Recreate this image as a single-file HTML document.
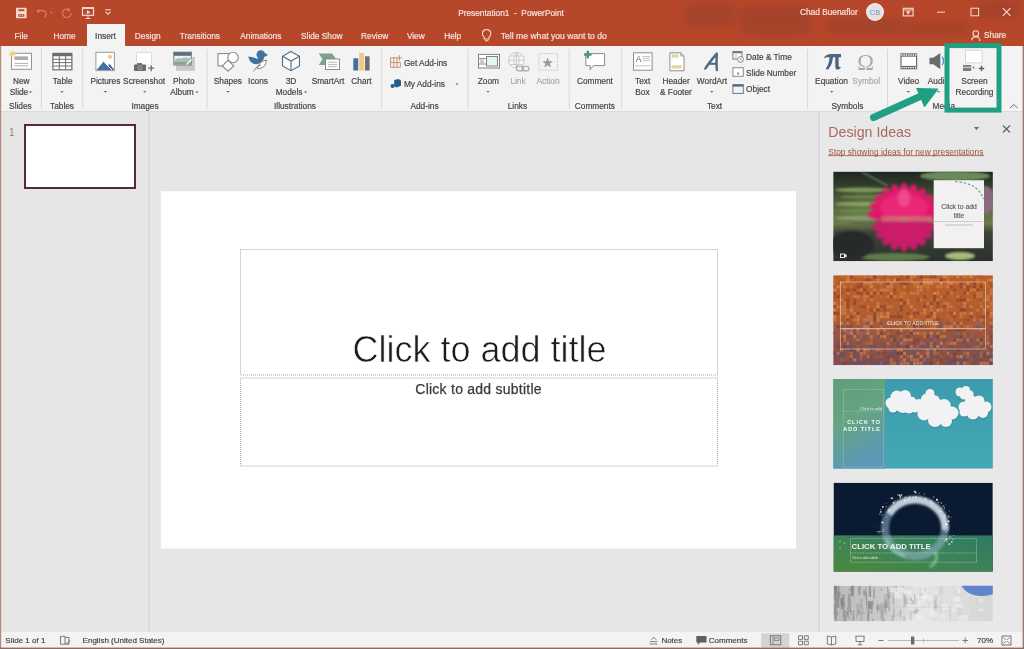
<!DOCTYPE html>
<html><head><meta charset="utf-8">
<style>
html,body{margin:0;padding:0;width:1024px;height:649px;overflow:hidden;background:#E6E6E6}
svg{display:block;filter:blur(0.4px);font-family:"Liberation Sans",sans-serif}
</style></head><body>
<svg width="1024" height="649" viewBox="0 0 1024 649">
<rect x="0" y="0" width="1024" height="46" fill="#B7472A"/>
<filter id="tb" x="-50%" y="-50%" width="200%" height="200%"><feGaussianBlur stdDeviation="4"/></filter>
<g filter="url(#tb)" fill="#A3432C" opacity="0.85"><rect x="684" y="3" width="52" height="24" rx="8"/><rect x="740" y="6" width="72" height="30" rx="8"/><rect x="826" y="17" width="74" height="17" rx="6"/><rect x="900" y="22" width="70" height="13" rx="6"/><rect x="975" y="0" width="45" height="18" rx="6"/></g>
<rect x="0" y="46" width="1024" height="66" fill="#F3F3F3"/>
<rect x="0" y="111" width="1024" height="1" fill="#DCDCDC"/>
<rect x="87" y="24" width="38" height="23" fill="#F3F3F3"/>
<rect x="0" y="112" width="1024" height="520" fill="#E6E6E6"/>
<text x="511" y="15.7" font-size="8.3" fill="#F7E4DE" stroke="#F7E4DE" stroke-width="0.18" text-anchor="middle" xml:space="preserve">Presentation1  -  PowerPoint</text>
<text x="800" y="15.2" font-size="8.3" fill="#F7E4DE" stroke="#F7E4DE" stroke-width="0.18" text-anchor="start" >Chad Buenaflor</text>
<text x="984" y="38.4" font-size="8.3" fill="#F7E4DE" stroke="#F7E4DE" stroke-width="0.18" text-anchor="start" >Share</text>
<text x="21.2" y="38.5" font-size="8.3" fill="#F7E4DE" stroke="#F7E4DE" stroke-width="0.18" text-anchor="middle" >File</text>
<text x="64.5" y="38.5" font-size="8.3" fill="#F7E4DE" stroke="#F7E4DE" stroke-width="0.18" text-anchor="middle" >Home</text>
<text x="147.7" y="38.5" font-size="8.3" fill="#F7E4DE" stroke="#F7E4DE" stroke-width="0.18" text-anchor="middle" >Design</text>
<text x="199.9" y="38.5" font-size="8.3" fill="#F7E4DE" stroke="#F7E4DE" stroke-width="0.18" text-anchor="middle" >Transitions</text>
<text x="260.8" y="38.5" font-size="8.3" fill="#F7E4DE" stroke="#F7E4DE" stroke-width="0.18" text-anchor="middle" >Animations</text>
<text x="321.8" y="38.5" font-size="8.3" fill="#F7E4DE" stroke="#F7E4DE" stroke-width="0.18" text-anchor="middle" >Slide Show</text>
<text x="374.7" y="38.5" font-size="8.3" fill="#F7E4DE" stroke="#F7E4DE" stroke-width="0.18" text-anchor="middle" >Review</text>
<text x="415.8" y="38.5" font-size="8.3" fill="#F7E4DE" stroke="#F7E4DE" stroke-width="0.18" text-anchor="middle" >View</text>
<text x="452.7" y="38.5" font-size="8.3" fill="#F7E4DE" stroke="#F7E4DE" stroke-width="0.18" text-anchor="middle" >Help</text>
<text x="105.5" y="38.5" font-size="8.3" fill="#444" stroke="#444" stroke-width="0.18" text-anchor="middle" >Insert</text>
<text x="500.8" y="38.5" font-size="8.6" fill="#F7E4DE" stroke="#F7E4DE" stroke-width="0.18" text-anchor="start" >Tell me what you want to do</text>
<text x="21.2" y="84.0" font-size="8.3" fill="#444" stroke="#444" stroke-width="0.18" text-anchor="middle" >New</text>
<text x="62.6" y="84.0" font-size="8.3" fill="#444" stroke="#444" stroke-width="0.18" text-anchor="middle" >Table</text>
<text x="105.4" y="84.0" font-size="8.3" fill="#444" stroke="#444" stroke-width="0.18" text-anchor="middle" >Pictures</text>
<text x="144.1" y="84.0" font-size="8.3" fill="#444" stroke="#444" stroke-width="0.18" text-anchor="middle" >Screenshot</text>
<text x="183.8" y="84.0" font-size="8.3" fill="#444" stroke="#444" stroke-width="0.18" text-anchor="middle" >Photo</text>
<text x="227.9" y="84.0" font-size="8.3" fill="#444" stroke="#444" stroke-width="0.18" text-anchor="middle" >Shapes</text>
<text x="258" y="84.0" font-size="8.3" fill="#444" stroke="#444" stroke-width="0.18" text-anchor="middle" >Icons</text>
<text x="291" y="84.0" font-size="8.3" fill="#444" stroke="#444" stroke-width="0.18" text-anchor="middle" >3D</text>
<text x="328" y="84.0" font-size="8.3" fill="#444" stroke="#444" stroke-width="0.18" text-anchor="middle" >SmartArt</text>
<text x="361.5" y="84.0" font-size="8.3" fill="#444" stroke="#444" stroke-width="0.18" text-anchor="middle" >Chart</text>
<text x="488.4" y="84.0" font-size="8.3" fill="#444" stroke="#444" stroke-width="0.18" text-anchor="middle" >Zoom</text>
<text x="594.9" y="84.0" font-size="8.3" fill="#444" stroke="#444" stroke-width="0.18" text-anchor="middle" >Comment</text>
<text x="642.6" y="84.0" font-size="8.3" fill="#444" stroke="#444" stroke-width="0.18" text-anchor="middle" >Text</text>
<text x="676.1" y="84.0" font-size="8.3" fill="#444" stroke="#444" stroke-width="0.18" text-anchor="middle" >Header</text>
<text x="712" y="84.0" font-size="8.3" fill="#444" stroke="#444" stroke-width="0.18" text-anchor="middle" >WordArt</text>
<text x="831.5" y="84.0" font-size="8.3" fill="#444" stroke="#444" stroke-width="0.18" text-anchor="middle" >Equation</text>
<text x="908.6" y="84.0" font-size="8.3" fill="#444" stroke="#444" stroke-width="0.18" text-anchor="middle" >Video</text>
<text x="938.4" y="84.0" font-size="8.3" fill="#444" stroke="#444" stroke-width="0.18" text-anchor="middle" >Audio</text>
<text x="974.5" y="84.0" font-size="8.3" fill="#444" stroke="#444" stroke-width="0.18" text-anchor="middle" >Screen</text>
<text x="518" y="84.0" font-size="8.3" fill="#A8A8A8" stroke="#A8A8A8" stroke-width="0.18" text-anchor="middle" >Link</text>
<text x="548" y="84.0" font-size="8.3" fill="#A8A8A8" stroke="#A8A8A8" stroke-width="0.18" text-anchor="middle" >Action</text>
<text x="866.2" y="84.0" font-size="8.3" fill="#A8A8A8" stroke="#A8A8A8" stroke-width="0.18" text-anchor="middle" >Symbol</text>
<text x="19.0" y="95.3" font-size="8.3" fill="#444" stroke="#444" stroke-width="0.18" text-anchor="middle">Slide</text>
<text x="182.0" y="95.3" font-size="8.3" fill="#444" stroke="#444" stroke-width="0.18" text-anchor="middle">Album</text>
<text x="289.0" y="95.3" font-size="8.3" fill="#444" stroke="#444" stroke-width="0.18" text-anchor="middle">Models</text>
<text x="642.4" y="95.3" font-size="8.3" fill="#444" stroke="#444" stroke-width="0.18" text-anchor="middle">Box</text>
<text x="675.9" y="95.3" font-size="8.3" fill="#444" stroke="#444" stroke-width="0.18" text-anchor="middle">&amp; Footer</text>
<text x="974.5" y="95.3" font-size="8.3" fill="#444" stroke="#444" stroke-width="0.18" text-anchor="middle">Recording</text>
<path d="M28.9,91.4 L32.1,91.4 L30.5,93.2 Z" fill="#666"/>
<path d="M60.4,91.2 L63.6,91.2 L62,93 Z" fill="#666"/>
<path d="M103.80000000000001,91.0 L107.0,91.0 L105.4,92.8 Z" fill="#666"/>
<path d="M143.1,91.0 L146.29999999999998,91.0 L144.7,92.8 Z" fill="#666"/>
<path d="M195.4,91.4 L198.6,91.4 L197,93.2 Z" fill="#666"/>
<path d="M226.3,91.0 L229.5,91.0 L227.9,92.8 Z" fill="#666"/>
<path d="M303.9,91.4 L307.1,91.4 L305.5,93.2 Z" fill="#666"/>
<path d="M486.4,91.0 L489.6,91.0 L488,92.8 Z" fill="#666"/>
<path d="M710.1999999999999,91.0 L713.4,91.0 L711.8,92.8 Z" fill="#666"/>
<path d="M830.1,91.0 L833.3000000000001,91.0 L831.7,92.8 Z" fill="#666"/>
<path d="M906.6999999999999,91.0 L909.9,91.0 L908.3,92.8 Z" fill="#666"/>
<path d="M936.9,91.0 L940.1,91.0 L938.5,92.8 Z" fill="#666"/>
<path d="M455.4,83.5 L458.6,83.5 L457,85.3 Z" fill="#666"/>
<text x="20.4" y="108.6" font-size="8.3" fill="#444" stroke="#444" stroke-width="0.18" text-anchor="middle" >Slides</text>
<text x="62" y="108.6" font-size="8.3" fill="#444" stroke="#444" stroke-width="0.18" text-anchor="middle" >Tables</text>
<text x="145" y="108.6" font-size="8.3" fill="#444" stroke="#444" stroke-width="0.18" text-anchor="middle" >Images</text>
<text x="295" y="108.6" font-size="8.3" fill="#444" stroke="#444" stroke-width="0.18" text-anchor="middle" >Illustrations</text>
<text x="424.5" y="108.6" font-size="8.3" fill="#444" stroke="#444" stroke-width="0.18" text-anchor="middle" >Add-ins</text>
<text x="517.4" y="108.6" font-size="8.3" fill="#444" stroke="#444" stroke-width="0.18" text-anchor="middle" >Links</text>
<text x="594.9" y="108.6" font-size="8.3" fill="#444" stroke="#444" stroke-width="0.18" text-anchor="middle" >Comments</text>
<text x="714.5" y="108.6" font-size="8.3" fill="#444" stroke="#444" stroke-width="0.18" text-anchor="middle" >Text</text>
<text x="847.5" y="108.6" font-size="8.3" fill="#444" stroke="#444" stroke-width="0.18" text-anchor="middle" >Symbols</text>
<text x="943.8" y="108.6" font-size="8.3" fill="#444" stroke="#444" stroke-width="0.18" text-anchor="middle" >Media</text>
<text x="403.9" y="65.5" font-size="8.3" fill="#444" stroke="#444" stroke-width="0.18" text-anchor="start" >Get Add-ins</text>
<text x="403.9" y="87.4" font-size="8.3" fill="#444" stroke="#444" stroke-width="0.18" text-anchor="start" >My Add-ins</text>
<text x="746.1" y="59.5" font-size="8.3" fill="#444" stroke="#444" stroke-width="0.18" text-anchor="start" >Date &amp; Time</text>
<text x="746.1" y="75.8" font-size="8.3" fill="#444" stroke="#444" stroke-width="0.18" text-anchor="start" >Slide Number</text>
<text x="746.1" y="92.0" font-size="8.3" fill="#444" stroke="#444" stroke-width="0.18" text-anchor="start" >Object</text>
<rect x="40.9" y="49" width="1" height="60" fill="#D8D8D8"/>
<rect x="82.2" y="49" width="1" height="60" fill="#D8D8D8"/>
<rect x="206.5" y="49" width="1" height="60" fill="#D8D8D8"/>
<rect x="381.2" y="49" width="1" height="60" fill="#D8D8D8"/>
<rect x="467.4" y="49" width="1" height="60" fill="#D8D8D8"/>
<rect x="568.7" y="49" width="1" height="60" fill="#D8D8D8"/>
<rect x="621.2" y="49" width="1" height="60" fill="#D8D8D8"/>
<rect x="807.1" y="49" width="1" height="60" fill="#D8D8D8"/>
<rect x="887.0" y="49" width="1" height="60" fill="#D8D8D8"/>
<path d="M1010,108 L1013.8,104.5 L1017.6,108" fill="none" stroke="#666" stroke-width="1"/>
<rect x="148.5" y="112" width="1.2" height="520" fill="#D2D2D2"/>
<rect x="818.5" y="112" width="1.2" height="520" fill="#D2D2D2"/>
<rect x="820" y="112" width="203" height="520" fill="#E8E8E8"/>
<text x="9" y="136" font-size="10" fill="#A8706A">1</text>
<rect x="25" y="125" width="110" height="63" fill="#fff" stroke="#5A2A2E" stroke-width="2"/>
<rect x="160.8" y="191.3" width="635.2" height="357.3" fill="#fff"/>
<rect x="240.5" y="249.5" width="477" height="125.5" fill="none" stroke="#A8A8A8" stroke-width="1" stroke-dasharray="1,1"/>
<rect x="240.5" y="378" width="477" height="88" fill="none" stroke="#A8A8A8" stroke-width="1" stroke-dasharray="1,1"/>
<text x="479.5" y="361.5" font-size="36" fill="#1C1C1C" stroke="#fff" stroke-width="0.6" text-anchor="middle">Click to add title</text>
<text x="478.6" y="393.8" font-size="14" letter-spacing="0.25" fill="#3A3A3A" stroke="#3A3A3A" stroke-width="0.25" text-anchor="middle">Click to add subtitle</text>
<text x="828.3" y="136.5" font-size="14.2" fill="#A8695F">Design Ideas</text>
<text x="828.3" y="154.5" font-size="8.4" fill="#A0523F">Stop showing ideas for new presentations</text>
<rect x="828.3" y="155.3" width="155.7" height="0.8" fill="#A0523F"/>
<path d="M974,127 L979,127 L976.5,130 Z" fill="#666"/>
<path d="M1003,125.5 L1010,132.5 M1010,125.5 L1003,132.5" stroke="#666" stroke-width="1.3"/>
<filter id="b0" x="-5%" y="-5%" width="110%" height="110%"><feGaussianBlur stdDeviation="0.5"/></filter>
<filter id="b1" x="-20%" y="-20%" width="140%" height="140%"><feGaussianBlur stdDeviation="1.2"/></filter>
<filter id="b15" x="-20%" y="-20%" width="140%" height="140%"><feGaussianBlur stdDeviation="1.6"/></filter>
<filter id="b2" x="-30%" y="-30%" width="160%" height="160%"><feGaussianBlur stdDeviation="2.5"/></filter>
<clipPath id="c1"><rect x="833.2" y="171.6" width="159.7" height="89.6"/></clipPath>
<clipPath id="c2"><rect x="833.2" y="275.2" width="159.7" height="90"/></clipPath>
<clipPath id="c3"><rect x="833.2" y="379" width="159.7" height="89.7"/></clipPath>
<clipPath id="c4"><rect x="833.5" y="482.7" width="159.3" height="89"/></clipPath>
<clipPath id="c5"><rect x="833.5" y="585.7" width="159.3" height="35.6"/></clipPath>
<linearGradient id="g1" x1="0" y1="0" x2="0" y2="1"><stop offset="0" stop-color="#1E2620"/><stop offset="0.18" stop-color="#34402E"/><stop offset="0.4" stop-color="#5A6A40"/><stop offset="0.58" stop-color="#6A7A4A"/><stop offset="0.68" stop-color="#3E4438"/><stop offset="1" stop-color="#2A302C"/></linearGradient>
<g clip-path="url(#c1)">
<rect x="833.2" y="171.6" width="159.7" height="89.6" fill="url(#g1)"/>
<g filter="url(#b1)">
<ellipse cx="862.5" cy="190" rx="27.5" ry="2.4" fill="#7E9858"/>
<ellipse cx="870.0" cy="197" rx="30.0" ry="2.4" fill="#687E48"/>
<ellipse cx="866.0" cy="204" rx="31.0" ry="2.4" fill="#86A05C"/>
<ellipse cx="873.0" cy="211" rx="35.0" ry="2.4" fill="#6A8848"/>
<ellipse cx="862.5" cy="218" rx="27.5" ry="2.4" fill="#8A9A6A"/>
<ellipse cx="875.0" cy="224" rx="25.0" ry="2.4" fill="#5A6A48"/>
<path d="M862,172 L888,186" stroke="#7A8A7A" stroke-width="1.3"/>
<ellipse cx="955" cy="176" rx="35" ry="5" fill="#6A8A5A"/>
<ellipse cx="985" cy="200" rx="10" ry="14" fill="#8A6A7A"/>
<ellipse cx="895" cy="257" rx="35" ry="4" fill="#5E7A48"/>
<ellipse cx="960" cy="256" rx="15" ry="4" fill="#A6B878"/>
<ellipse cx="852" cy="245" rx="22" ry="14" fill="#262C2C"/>
</g>
<g filter="url(#b15)">
<ellipse cx="884.5" cy="215.5" rx="5.5" ry="17" fill="#E2186C" transform="rotate(-85.0 884.5 215.5)"/>
<ellipse cx="885.9" cy="210.6" rx="5.5" ry="17" fill="#E2186C" transform="rotate(-68.0 885.9 210.6)"/>
<ellipse cx="888.8" cy="206.3" rx="5.5" ry="17" fill="#E2186C" transform="rotate(-51.0 888.8 206.3)"/>
<ellipse cx="893.1" cy="202.9" rx="5.5" ry="17" fill="#E2186C" transform="rotate(-34.0 893.1 202.9)"/>
<ellipse cx="898.3" cy="200.7" rx="5.5" ry="17" fill="#E2186C" transform="rotate(-17.0 898.3 200.7)"/>
<ellipse cx="904.0" cy="200.0" rx="5.5" ry="17" fill="#E2186C" transform="rotate(0.0 904.0 200.0)"/>
<ellipse cx="909.7" cy="200.7" rx="5.5" ry="17" fill="#E2186C" transform="rotate(17.0 909.7 200.7)"/>
<ellipse cx="914.9" cy="202.9" rx="5.5" ry="17" fill="#E2186C" transform="rotate(34.0 914.9 202.9)"/>
<ellipse cx="919.2" cy="206.3" rx="5.5" ry="17" fill="#E2186C" transform="rotate(51.0 919.2 206.3)"/>
<ellipse cx="922.1" cy="210.6" rx="5.5" ry="17" fill="#E2186C" transform="rotate(68.0 922.1 210.6)"/>
<ellipse cx="923.5" cy="215.5" rx="5.5" ry="17" fill="#E2186C" transform="rotate(85.0 923.5 215.5)"/>
<ellipse cx="904" cy="207" rx="24" ry="13" fill="#EA2676"/>
<ellipse cx="904" cy="198" rx="6" ry="9" fill="#F04A90"/>
<ellipse cx="921.0" cy="224.6" rx="5.5" ry="15" fill="#C81A68" transform="rotate(100.0 921.0 224.6)"/>
<ellipse cx="918.9" cy="229.5" rx="5.5" ry="15" fill="#C81A68" transform="rotate(120.0 918.9 229.5)"/>
<ellipse cx="915.1" cy="233.5" rx="5.5" ry="15" fill="#C81A68" transform="rotate(140.0 915.1 233.5)"/>
<ellipse cx="909.9" cy="236.1" rx="5.5" ry="15" fill="#C81A68" transform="rotate(160.0 909.9 236.1)"/>
<ellipse cx="904.0" cy="237.0" rx="5.5" ry="15" fill="#C81A68" transform="rotate(180.0 904.0 237.0)"/>
<ellipse cx="898.1" cy="236.1" rx="5.5" ry="15" fill="#C81A68" transform="rotate(200.0 898.1 236.1)"/>
<ellipse cx="892.9" cy="233.5" rx="5.5" ry="15" fill="#C81A68" transform="rotate(220.0 892.9 233.5)"/>
<ellipse cx="889.1" cy="229.5" rx="5.5" ry="15" fill="#C81A68" transform="rotate(240.0 889.1 229.5)"/>
<ellipse cx="887.0" cy="224.6" rx="5.5" ry="15" fill="#C81A68" transform="rotate(260.0 887.0 224.6)"/>
<ellipse cx="904" cy="232" rx="22" ry="10" fill="#CC1C6A"/>
<rect x="882" y="217" width="50" height="4" fill="#C8907A" opacity="0.7"/>
</g>
<rect x="933.7" y="180.2" width="50.3" height="68" fill="#F3F0F2"/>
<path d="M955,181.5 Q978,183 983.5,199" fill="none" stroke="#58A8A0" stroke-width="1.2" stroke-dasharray="2.5,1.8"/>
<text x="959" y="209" font-size="6.8" fill="#606060" text-anchor="middle" stroke="#606060" stroke-width="0.15">Click to add</text>
<text x="959" y="217.5" font-size="6.8" fill="#606060" text-anchor="middle" stroke="#606060" stroke-width="0.15">title</text>
<path d="M935,221.5 H983" stroke="#888" stroke-width="0.6" stroke-dasharray="0.8,0.6"/>
<path d="M945,225 H973" stroke="#B0B0B0" stroke-width="0.8"/>
<rect x="840.5" y="254" width="4" height="3.5" fill="none" stroke="#fff" stroke-width="0.9"/><path d="M844.5,255 L846.5,254 V257.5 L844.5,256.5" fill="#fff"/>
</g>
<linearGradient id="g2" x1="0" y1="0" x2="0" y2="1"><stop offset="0" stop-color="#BA5E2A"/><stop offset="0.45" stop-color="#B45E30"/><stop offset="0.75" stop-color="#8E5246"/><stop offset="1" stop-color="#7A4E50"/></linearGradient>
<pattern id="p2" x="833" y="275" width="12" height="8" patternUnits="userSpaceOnUse"><rect x="0" y="0" width="5.5" height="3.6" fill="#E08A40" opacity="0.35"/><rect x="6" y="4" width="5.5" height="3.6" fill="#6A3A2A" opacity="0.3"/><rect x="6" y="0" width="5.5" height="3.6" fill="#D4703A" opacity="0.25"/><rect x="0" y="4" width="5.5" height="3.6" fill="#B8785A" opacity="0.3"/></pattern>
<g clip-path="url(#c2)">
<rect x="833.2" y="275.2" width="159.7" height="90" fill="url(#g2)"/>
<g><rect x="839.9" y="275.2" width="3" height="3" fill="#D2702E" opacity="0.55"/><rect x="843.2" y="275.2" width="3" height="3" fill="#D2702E" opacity="0.55"/><rect x="846.5" y="275.2" width="3" height="3" fill="#E0863E" opacity="0.55"/><rect x="849.9" y="275.2" width="3" height="3" fill="#8A3A2A" opacity="0.55"/><rect x="856.5" y="275.2" width="3" height="3" fill="#D2702E" opacity="0.55"/><rect x="863.2" y="275.2" width="3" height="3" fill="#E0863E" opacity="0.55"/><rect x="866.5" y="275.2" width="3" height="3" fill="#D2702E" opacity="0.55"/><rect x="869.8" y="275.2" width="3" height="3" fill="#E0863E" opacity="0.55"/><rect x="873.2" y="275.2" width="3" height="3" fill="#6A3A30" opacity="0.55"/><rect x="883.2" y="275.2" width="3" height="3" fill="#A8502A" opacity="0.55"/><rect x="899.8" y="275.2" width="3" height="3" fill="#A8502A" opacity="0.55"/><rect x="906.5" y="275.2" width="3" height="3" fill="#8A3A2A" opacity="0.55"/><rect x="909.8" y="275.2" width="3" height="3" fill="#D89060" opacity="0.55"/><rect x="913.1" y="275.2" width="3" height="3" fill="#E0863E" opacity="0.55"/><rect x="916.5" y="275.2" width="3" height="3" fill="#B05A3A" opacity="0.55"/><rect x="919.8" y="275.2" width="3" height="3" fill="#6A3A30" opacity="0.55"/><rect x="923.1" y="275.2" width="3" height="3" fill="#B05A3A" opacity="0.55"/><rect x="926.4" y="275.2" width="3" height="3" fill="#B05A3A" opacity="0.55"/><rect x="929.8" y="275.2" width="3" height="3" fill="#8A3A2A" opacity="0.55"/><rect x="933.1" y="275.2" width="3" height="3" fill="#8A3A2A" opacity="0.55"/><rect x="943.1" y="275.2" width="3" height="3" fill="#E8A060" opacity="0.55"/><rect x="946.4" y="275.2" width="3" height="3" fill="#C88A5A" opacity="0.55"/><rect x="949.8" y="275.2" width="3" height="3" fill="#D2702E" opacity="0.55"/><rect x="956.4" y="275.2" width="3" height="3" fill="#E8A060" opacity="0.55"/><rect x="963.1" y="275.2" width="3" height="3" fill="#E0863E" opacity="0.55"/><rect x="966.4" y="275.2" width="3" height="3" fill="#D2702E" opacity="0.55"/><rect x="969.7" y="275.2" width="3" height="3" fill="#E8A060" opacity="0.55"/><rect x="976.4" y="275.2" width="3" height="3" fill="#B05A3A" opacity="0.55"/><rect x="979.7" y="275.2" width="3" height="3" fill="#B05A3A" opacity="0.55"/><rect x="833.2" y="278.5" width="3" height="3" fill="#D2702E" opacity="0.55"/><rect x="839.9" y="278.5" width="3" height="3" fill="#B05A3A" opacity="0.55"/><rect x="846.5" y="278.5" width="3" height="3" fill="#E8A060" opacity="0.55"/><rect x="853.2" y="278.5" width="3" height="3" fill="#A8502A" opacity="0.55"/><rect x="856.5" y="278.5" width="3" height="3" fill="#B05A3A" opacity="0.55"/><rect x="863.2" y="278.5" width="3" height="3" fill="#A8502A" opacity="0.55"/><rect x="866.5" y="278.5" width="3" height="3" fill="#6A3A30" opacity="0.55"/><rect x="869.8" y="278.5" width="3" height="3" fill="#B05A3A" opacity="0.55"/><rect x="876.5" y="278.5" width="3" height="3" fill="#D89060" opacity="0.55"/><rect x="886.5" y="278.5" width="3" height="3" fill="#D89060" opacity="0.55"/><rect x="893.1" y="278.5" width="3" height="3" fill="#E8A060" opacity="0.55"/><rect x="896.5" y="278.5" width="3" height="3" fill="#6A3A30" opacity="0.55"/><rect x="899.8" y="278.5" width="3" height="3" fill="#A8502A" opacity="0.55"/><rect x="909.8" y="278.5" width="3" height="3" fill="#E0863E" opacity="0.55"/><rect x="913.1" y="278.5" width="3" height="3" fill="#A8502A" opacity="0.55"/><rect x="923.1" y="278.5" width="3" height="3" fill="#E8A060" opacity="0.55"/><rect x="926.4" y="278.5" width="3" height="3" fill="#E8A060" opacity="0.55"/><rect x="929.8" y="278.5" width="3" height="3" fill="#D89060" opacity="0.55"/><rect x="933.1" y="278.5" width="3" height="3" fill="#E0863E" opacity="0.55"/><rect x="936.4" y="278.5" width="3" height="3" fill="#D89060" opacity="0.55"/><rect x="939.8" y="278.5" width="3" height="3" fill="#6A3A30" opacity="0.55"/><rect x="943.1" y="278.5" width="3" height="3" fill="#B05A3A" opacity="0.55"/><rect x="946.4" y="278.5" width="3" height="3" fill="#E0863E" opacity="0.55"/><rect x="953.1" y="278.5" width="3" height="3" fill="#B05A3A" opacity="0.55"/><rect x="976.4" y="278.5" width="3" height="3" fill="#E0863E" opacity="0.55"/><rect x="986.4" y="278.5" width="3" height="3" fill="#C88A5A" opacity="0.55"/><rect x="989.7" y="278.5" width="3" height="3" fill="#E8A060" opacity="0.55"/><rect x="833.2" y="281.9" width="3" height="3" fill="#D2702E" opacity="0.55"/><rect x="836.5" y="281.9" width="3" height="3" fill="#B05A3A" opacity="0.55"/><rect x="839.9" y="281.9" width="3" height="3" fill="#C88A5A" opacity="0.55"/><rect x="856.5" y="281.9" width="3" height="3" fill="#A8502A" opacity="0.55"/><rect x="859.8" y="281.9" width="3" height="3" fill="#8A3A2A" opacity="0.55"/><rect x="863.2" y="281.9" width="3" height="3" fill="#D89060" opacity="0.55"/><rect x="866.5" y="281.9" width="3" height="3" fill="#D89060" opacity="0.55"/><rect x="869.8" y="281.9" width="3" height="3" fill="#D89060" opacity="0.55"/><rect x="876.5" y="281.9" width="3" height="3" fill="#D2702E" opacity="0.55"/><rect x="879.8" y="281.9" width="3" height="3" fill="#C88A5A" opacity="0.55"/><rect x="883.2" y="281.9" width="3" height="3" fill="#A8502A" opacity="0.55"/><rect x="886.5" y="281.9" width="3" height="3" fill="#8A3A2A" opacity="0.55"/><rect x="889.8" y="281.9" width="3" height="3" fill="#D89060" opacity="0.55"/><rect x="899.8" y="281.9" width="3" height="3" fill="#8A3A2A" opacity="0.55"/><rect x="903.1" y="281.9" width="3" height="3" fill="#6A3A30" opacity="0.55"/><rect x="906.5" y="281.9" width="3" height="3" fill="#8A3A2A" opacity="0.55"/><rect x="913.1" y="281.9" width="3" height="3" fill="#E0863E" opacity="0.55"/><rect x="916.5" y="281.9" width="3" height="3" fill="#C88A5A" opacity="0.55"/><rect x="919.8" y="281.9" width="3" height="3" fill="#8A3A2A" opacity="0.55"/><rect x="923.1" y="281.9" width="3" height="3" fill="#E8A060" opacity="0.55"/><rect x="926.4" y="281.9" width="3" height="3" fill="#E8A060" opacity="0.55"/><rect x="929.8" y="281.9" width="3" height="3" fill="#E8A060" opacity="0.55"/><rect x="939.8" y="281.9" width="3" height="3" fill="#E8A060" opacity="0.55"/><rect x="946.4" y="281.9" width="3" height="3" fill="#E0863E" opacity="0.55"/><rect x="949.8" y="281.9" width="3" height="3" fill="#E8A060" opacity="0.55"/><rect x="953.1" y="281.9" width="3" height="3" fill="#D2702E" opacity="0.55"/><rect x="956.4" y="281.9" width="3" height="3" fill="#D2702E" opacity="0.55"/><rect x="959.7" y="281.9" width="3" height="3" fill="#8A3A2A" opacity="0.55"/><rect x="963.1" y="281.9" width="3" height="3" fill="#A8502A" opacity="0.55"/><rect x="966.4" y="281.9" width="3" height="3" fill="#E8A060" opacity="0.55"/><rect x="973.1" y="281.9" width="3" height="3" fill="#6A3A30" opacity="0.55"/><rect x="976.4" y="281.9" width="3" height="3" fill="#D2702E" opacity="0.55"/><rect x="979.7" y="281.9" width="3" height="3" fill="#A8502A" opacity="0.55"/><rect x="983.1" y="281.9" width="3" height="3" fill="#E0863E" opacity="0.55"/><rect x="989.7" y="281.9" width="3" height="3" fill="#A8502A" opacity="0.55"/><rect x="833.2" y="285.2" width="3" height="3" fill="#B05A3A" opacity="0.55"/><rect x="836.5" y="285.2" width="3" height="3" fill="#E8A060" opacity="0.55"/><rect x="843.2" y="285.2" width="3" height="3" fill="#E0863E" opacity="0.55"/><rect x="849.9" y="285.2" width="3" height="3" fill="#D2702E" opacity="0.55"/><rect x="853.2" y="285.2" width="3" height="3" fill="#A8502A" opacity="0.55"/><rect x="856.5" y="285.2" width="3" height="3" fill="#8A3A2A" opacity="0.55"/><rect x="859.8" y="285.2" width="3" height="3" fill="#8A3A2A" opacity="0.55"/><rect x="869.8" y="285.2" width="3" height="3" fill="#E8A060" opacity="0.55"/><rect x="876.5" y="285.2" width="3" height="3" fill="#A8502A" opacity="0.55"/><rect x="883.2" y="285.2" width="3" height="3" fill="#B05A3A" opacity="0.55"/><rect x="886.5" y="285.2" width="3" height="3" fill="#D89060" opacity="0.55"/><rect x="889.8" y="285.2" width="3" height="3" fill="#D89060" opacity="0.55"/><rect x="899.8" y="285.2" width="3" height="3" fill="#B05A3A" opacity="0.55"/><rect x="903.1" y="285.2" width="3" height="3" fill="#E0863E" opacity="0.55"/><rect x="906.5" y="285.2" width="3" height="3" fill="#A8502A" opacity="0.55"/><rect x="913.1" y="285.2" width="3" height="3" fill="#D2702E" opacity="0.55"/><rect x="916.5" y="285.2" width="3" height="3" fill="#E8A060" opacity="0.55"/><rect x="919.8" y="285.2" width="3" height="3" fill="#D89060" opacity="0.55"/><rect x="923.1" y="285.2" width="3" height="3" fill="#D2702E" opacity="0.55"/><rect x="926.4" y="285.2" width="3" height="3" fill="#E0863E" opacity="0.55"/><rect x="936.4" y="285.2" width="3" height="3" fill="#D89060" opacity="0.55"/><rect x="939.8" y="285.2" width="3" height="3" fill="#E0863E" opacity="0.55"/><rect x="943.1" y="285.2" width="3" height="3" fill="#D2702E" opacity="0.55"/><rect x="946.4" y="285.2" width="3" height="3" fill="#D89060" opacity="0.55"/><rect x="949.8" y="285.2" width="3" height="3" fill="#8A3A2A" opacity="0.55"/><rect x="953.1" y="285.2" width="3" height="3" fill="#B05A3A" opacity="0.55"/><rect x="956.4" y="285.2" width="3" height="3" fill="#B05A3A" opacity="0.55"/><rect x="959.7" y="285.2" width="3" height="3" fill="#8A3A2A" opacity="0.55"/><rect x="963.1" y="285.2" width="3" height="3" fill="#C88A5A" opacity="0.55"/><rect x="966.4" y="285.2" width="3" height="3" fill="#8A3A2A" opacity="0.55"/><rect x="969.7" y="285.2" width="3" height="3" fill="#A8502A" opacity="0.55"/><rect x="973.1" y="285.2" width="3" height="3" fill="#6A3A30" opacity="0.55"/><rect x="976.4" y="285.2" width="3" height="3" fill="#D2702E" opacity="0.55"/><rect x="979.7" y="285.2" width="3" height="3" fill="#6A3A30" opacity="0.55"/><rect x="986.4" y="285.2" width="3" height="3" fill="#D2702E" opacity="0.55"/><rect x="989.7" y="285.2" width="3" height="3" fill="#A8502A" opacity="0.55"/><rect x="833.2" y="288.5" width="3" height="3" fill="#E8A060" opacity="0.55"/><rect x="839.9" y="288.5" width="3" height="3" fill="#B05A3A" opacity="0.55"/><rect x="846.5" y="288.5" width="3" height="3" fill="#6A3A30" opacity="0.55"/><rect x="849.9" y="288.5" width="3" height="3" fill="#A8502A" opacity="0.55"/><rect x="853.2" y="288.5" width="3" height="3" fill="#8A3A2A" opacity="0.55"/><rect x="859.8" y="288.5" width="3" height="3" fill="#D89060" opacity="0.55"/><rect x="863.2" y="288.5" width="3" height="3" fill="#6A3A30" opacity="0.55"/><rect x="873.2" y="288.5" width="3" height="3" fill="#E0863E" opacity="0.55"/><rect x="879.8" y="288.5" width="3" height="3" fill="#E0863E" opacity="0.55"/><rect x="883.2" y="288.5" width="3" height="3" fill="#D89060" opacity="0.55"/><rect x="886.5" y="288.5" width="3" height="3" fill="#D89060" opacity="0.55"/><rect x="889.8" y="288.5" width="3" height="3" fill="#D2702E" opacity="0.55"/><rect x="893.1" y="288.5" width="3" height="3" fill="#8A3A2A" opacity="0.55"/><rect x="896.5" y="288.5" width="3" height="3" fill="#D2702E" opacity="0.55"/><rect x="906.5" y="288.5" width="3" height="3" fill="#A8502A" opacity="0.55"/><rect x="916.5" y="288.5" width="3" height="3" fill="#C88A5A" opacity="0.55"/><rect x="919.8" y="288.5" width="3" height="3" fill="#D89060" opacity="0.55"/><rect x="923.1" y="288.5" width="3" height="3" fill="#B05A3A" opacity="0.55"/><rect x="926.4" y="288.5" width="3" height="3" fill="#D2702E" opacity="0.55"/><rect x="933.1" y="288.5" width="3" height="3" fill="#A8502A" opacity="0.55"/><rect x="936.4" y="288.5" width="3" height="3" fill="#D2702E" opacity="0.55"/><rect x="953.1" y="288.5" width="3" height="3" fill="#8A3A2A" opacity="0.55"/><rect x="959.7" y="288.5" width="3" height="3" fill="#B05A3A" opacity="0.55"/><rect x="966.4" y="288.5" width="3" height="3" fill="#6A3A30" opacity="0.55"/><rect x="969.7" y="288.5" width="3" height="3" fill="#C88A5A" opacity="0.55"/><rect x="973.1" y="288.5" width="3" height="3" fill="#E0863E" opacity="0.55"/><rect x="976.4" y="288.5" width="3" height="3" fill="#8A3A2A" opacity="0.55"/><rect x="979.7" y="288.5" width="3" height="3" fill="#A8502A" opacity="0.55"/><rect x="989.7" y="288.5" width="3" height="3" fill="#C88A5A" opacity="0.55"/><rect x="833.2" y="291.8" width="3" height="3" fill="#8A3A2A" opacity="0.55"/><rect x="839.9" y="291.8" width="3" height="3" fill="#A8502A" opacity="0.55"/><rect x="846.5" y="291.8" width="3" height="3" fill="#C88A5A" opacity="0.55"/><rect x="856.5" y="291.8" width="3" height="3" fill="#8A3A2A" opacity="0.55"/><rect x="859.8" y="291.8" width="3" height="3" fill="#8A3A2A" opacity="0.55"/><rect x="863.2" y="291.8" width="3" height="3" fill="#D2702E" opacity="0.55"/><rect x="866.5" y="291.8" width="3" height="3" fill="#6A3A30" opacity="0.55"/><rect x="869.8" y="291.8" width="3" height="3" fill="#D89060" opacity="0.55"/><rect x="873.2" y="291.8" width="3" height="3" fill="#6A3A30" opacity="0.55"/><rect x="876.5" y="291.8" width="3" height="3" fill="#C88A5A" opacity="0.55"/><rect x="879.8" y="291.8" width="3" height="3" fill="#8A3A2A" opacity="0.55"/><rect x="886.5" y="291.8" width="3" height="3" fill="#A8502A" opacity="0.55"/><rect x="889.8" y="291.8" width="3" height="3" fill="#E8A060" opacity="0.55"/><rect x="893.1" y="291.8" width="3" height="3" fill="#A8502A" opacity="0.55"/><rect x="899.8" y="291.8" width="3" height="3" fill="#C88A5A" opacity="0.55"/><rect x="903.1" y="291.8" width="3" height="3" fill="#E0863E" opacity="0.55"/><rect x="909.8" y="291.8" width="3" height="3" fill="#D89060" opacity="0.55"/><rect x="913.1" y="291.8" width="3" height="3" fill="#C88A5A" opacity="0.55"/><rect x="916.5" y="291.8" width="3" height="3" fill="#C88A5A" opacity="0.55"/><rect x="933.1" y="291.8" width="3" height="3" fill="#E8A060" opacity="0.55"/><rect x="936.4" y="291.8" width="3" height="3" fill="#D89060" opacity="0.55"/><rect x="946.4" y="291.8" width="3" height="3" fill="#8A3A2A" opacity="0.55"/><rect x="949.8" y="291.8" width="3" height="3" fill="#E0863E" opacity="0.55"/><rect x="963.1" y="291.8" width="3" height="3" fill="#8A3A2A" opacity="0.55"/><rect x="966.4" y="291.8" width="3" height="3" fill="#E0863E" opacity="0.55"/><rect x="973.1" y="291.8" width="3" height="3" fill="#A8502A" opacity="0.55"/><rect x="976.4" y="291.8" width="3" height="3" fill="#E0863E" opacity="0.55"/><rect x="979.7" y="291.8" width="3" height="3" fill="#C88A5A" opacity="0.55"/><rect x="989.7" y="291.8" width="3" height="3" fill="#D89060" opacity="0.55"/><rect x="833.2" y="295.2" width="3" height="3" fill="#A8502A" opacity="0.55"/><rect x="836.5" y="295.2" width="3" height="3" fill="#6A3A30" opacity="0.55"/><rect x="839.9" y="295.2" width="3" height="3" fill="#B05A3A" opacity="0.55"/><rect x="846.5" y="295.2" width="3" height="3" fill="#A8502A" opacity="0.55"/><rect x="853.2" y="295.2" width="3" height="3" fill="#D89060" opacity="0.55"/><rect x="856.5" y="295.2" width="3" height="3" fill="#D89060" opacity="0.55"/><rect x="863.2" y="295.2" width="3" height="3" fill="#D89060" opacity="0.55"/><rect x="866.5" y="295.2" width="3" height="3" fill="#E0863E" opacity="0.55"/><rect x="869.8" y="295.2" width="3" height="3" fill="#8A3A2A" opacity="0.55"/><rect x="879.8" y="295.2" width="3" height="3" fill="#D2702E" opacity="0.55"/><rect x="883.2" y="295.2" width="3" height="3" fill="#B05A3A" opacity="0.55"/><rect x="886.5" y="295.2" width="3" height="3" fill="#E0863E" opacity="0.55"/><rect x="889.8" y="295.2" width="3" height="3" fill="#8A3A2A" opacity="0.55"/><rect x="893.1" y="295.2" width="3" height="3" fill="#E0863E" opacity="0.55"/><rect x="896.5" y="295.2" width="3" height="3" fill="#D2702E" opacity="0.55"/><rect x="899.8" y="295.2" width="3" height="3" fill="#D89060" opacity="0.55"/><rect x="903.1" y="295.2" width="3" height="3" fill="#D2702E" opacity="0.55"/><rect x="906.5" y="295.2" width="3" height="3" fill="#D2702E" opacity="0.55"/><rect x="909.8" y="295.2" width="3" height="3" fill="#B05A3A" opacity="0.55"/><rect x="923.1" y="295.2" width="3" height="3" fill="#8A3A2A" opacity="0.55"/><rect x="929.8" y="295.2" width="3" height="3" fill="#B05A3A" opacity="0.55"/><rect x="933.1" y="295.2" width="3" height="3" fill="#6A3A30" opacity="0.55"/><rect x="939.8" y="295.2" width="3" height="3" fill="#C88A5A" opacity="0.55"/><rect x="943.1" y="295.2" width="3" height="3" fill="#8A3A2A" opacity="0.55"/><rect x="956.4" y="295.2" width="3" height="3" fill="#C88A5A" opacity="0.55"/><rect x="959.7" y="295.2" width="3" height="3" fill="#A8502A" opacity="0.55"/><rect x="973.1" y="295.2" width="3" height="3" fill="#8A3A2A" opacity="0.55"/><rect x="976.4" y="295.2" width="3" height="3" fill="#C88A5A" opacity="0.55"/><rect x="979.7" y="295.2" width="3" height="3" fill="#C88A5A" opacity="0.55"/><rect x="983.1" y="295.2" width="3" height="3" fill="#B05A3A" opacity="0.55"/><rect x="986.4" y="295.2" width="3" height="3" fill="#D89060" opacity="0.55"/><rect x="833.2" y="298.5" width="3" height="3" fill="#B05A3A" opacity="0.55"/><rect x="839.9" y="298.5" width="3" height="3" fill="#D89060" opacity="0.55"/><rect x="843.2" y="298.5" width="3" height="3" fill="#B05A3A" opacity="0.55"/><rect x="846.5" y="298.5" width="3" height="3" fill="#6A3A30" opacity="0.55"/><rect x="853.2" y="298.5" width="3" height="3" fill="#8A3A2A" opacity="0.55"/><rect x="863.2" y="298.5" width="3" height="3" fill="#C88A5A" opacity="0.55"/><rect x="866.5" y="298.5" width="3" height="3" fill="#A8502A" opacity="0.55"/><rect x="869.8" y="298.5" width="3" height="3" fill="#D89060" opacity="0.55"/><rect x="879.8" y="298.5" width="3" height="3" fill="#B05A3A" opacity="0.55"/><rect x="883.2" y="298.5" width="3" height="3" fill="#B05A3A" opacity="0.55"/><rect x="886.5" y="298.5" width="3" height="3" fill="#A8502A" opacity="0.55"/><rect x="893.1" y="298.5" width="3" height="3" fill="#B05A3A" opacity="0.55"/><rect x="896.5" y="298.5" width="3" height="3" fill="#A8502A" opacity="0.55"/><rect x="899.8" y="298.5" width="3" height="3" fill="#6A3A30" opacity="0.55"/><rect x="906.5" y="298.5" width="3" height="3" fill="#E0863E" opacity="0.55"/><rect x="916.5" y="298.5" width="3" height="3" fill="#8A3A2A" opacity="0.55"/><rect x="919.8" y="298.5" width="3" height="3" fill="#C88A5A" opacity="0.55"/><rect x="929.8" y="298.5" width="3" height="3" fill="#D2702E" opacity="0.55"/><rect x="933.1" y="298.5" width="3" height="3" fill="#6A3A30" opacity="0.55"/><rect x="936.4" y="298.5" width="3" height="3" fill="#E0863E" opacity="0.55"/><rect x="946.4" y="298.5" width="3" height="3" fill="#A8502A" opacity="0.55"/><rect x="956.4" y="298.5" width="3" height="3" fill="#8A3A2A" opacity="0.55"/><rect x="959.7" y="298.5" width="3" height="3" fill="#6A3A30" opacity="0.55"/><rect x="963.1" y="298.5" width="3" height="3" fill="#6A3A30" opacity="0.55"/><rect x="966.4" y="298.5" width="3" height="3" fill="#D89060" opacity="0.55"/><rect x="969.7" y="298.5" width="3" height="3" fill="#D2702E" opacity="0.55"/><rect x="976.4" y="298.5" width="3" height="3" fill="#B05A3A" opacity="0.55"/><rect x="979.7" y="298.5" width="3" height="3" fill="#A8502A" opacity="0.55"/><rect x="983.1" y="298.5" width="3" height="3" fill="#C88A5A" opacity="0.55"/><rect x="986.4" y="298.5" width="3" height="3" fill="#D89060" opacity="0.55"/><rect x="833.2" y="301.8" width="3" height="3" fill="#E8A060" opacity="0.55"/><rect x="843.2" y="301.8" width="3" height="3" fill="#C88A5A" opacity="0.55"/><rect x="846.5" y="301.8" width="3" height="3" fill="#8A3A2A" opacity="0.55"/><rect x="853.2" y="301.8" width="3" height="3" fill="#6A3A30" opacity="0.55"/><rect x="859.8" y="301.8" width="3" height="3" fill="#D2702E" opacity="0.55"/><rect x="866.5" y="301.8" width="3" height="3" fill="#B05A3A" opacity="0.55"/><rect x="869.8" y="301.8" width="3" height="3" fill="#B05A3A" opacity="0.55"/><rect x="873.2" y="301.8" width="3" height="3" fill="#B05A3A" opacity="0.55"/><rect x="876.5" y="301.8" width="3" height="3" fill="#D89060" opacity="0.55"/><rect x="899.8" y="301.8" width="3" height="3" fill="#E0863E" opacity="0.55"/><rect x="903.1" y="301.8" width="3" height="3" fill="#6A3A30" opacity="0.55"/><rect x="906.5" y="301.8" width="3" height="3" fill="#D89060" opacity="0.55"/><rect x="916.5" y="301.8" width="3" height="3" fill="#B05A3A" opacity="0.55"/><rect x="923.1" y="301.8" width="3" height="3" fill="#A8502A" opacity="0.55"/><rect x="926.4" y="301.8" width="3" height="3" fill="#D89060" opacity="0.55"/><rect x="929.8" y="301.8" width="3" height="3" fill="#8A3A2A" opacity="0.55"/><rect x="936.4" y="301.8" width="3" height="3" fill="#6A3A30" opacity="0.55"/><rect x="939.8" y="301.8" width="3" height="3" fill="#B05A3A" opacity="0.55"/><rect x="943.1" y="301.8" width="3" height="3" fill="#C88A5A" opacity="0.55"/><rect x="946.4" y="301.8" width="3" height="3" fill="#E0863E" opacity="0.55"/><rect x="953.1" y="301.8" width="3" height="3" fill="#B05A3A" opacity="0.55"/><rect x="956.4" y="301.8" width="3" height="3" fill="#B05A3A" opacity="0.55"/><rect x="963.1" y="301.8" width="3" height="3" fill="#D89060" opacity="0.55"/><rect x="966.4" y="301.8" width="3" height="3" fill="#B05A3A" opacity="0.55"/><rect x="979.7" y="301.8" width="3" height="3" fill="#D2702E" opacity="0.55"/><rect x="983.1" y="301.8" width="3" height="3" fill="#B05A3A" opacity="0.55"/><rect x="989.7" y="301.8" width="3" height="3" fill="#E0863E" opacity="0.55"/><rect x="833.2" y="305.2" width="3" height="3" fill="#8A3A2A" opacity="0.55"/><rect x="836.5" y="305.2" width="3" height="3" fill="#E0863E" opacity="0.55"/><rect x="839.9" y="305.2" width="3" height="3" fill="#C88A5A" opacity="0.55"/><rect x="843.2" y="305.2" width="3" height="3" fill="#C88A5A" opacity="0.55"/><rect x="846.5" y="305.2" width="3" height="3" fill="#6A3A30" opacity="0.55"/><rect x="849.9" y="305.2" width="3" height="3" fill="#D2702E" opacity="0.55"/><rect x="859.8" y="305.2" width="3" height="3" fill="#8A3A2A" opacity="0.55"/><rect x="863.2" y="305.2" width="3" height="3" fill="#8A3A2A" opacity="0.55"/><rect x="866.5" y="305.2" width="3" height="3" fill="#E0863E" opacity="0.55"/><rect x="876.5" y="305.2" width="3" height="3" fill="#E8A060" opacity="0.55"/><rect x="879.8" y="305.2" width="3" height="3" fill="#8A3A2A" opacity="0.55"/><rect x="883.2" y="305.2" width="3" height="3" fill="#8A3A2A" opacity="0.55"/><rect x="886.5" y="305.2" width="3" height="3" fill="#E0863E" opacity="0.55"/><rect x="889.8" y="305.2" width="3" height="3" fill="#C88A5A" opacity="0.55"/><rect x="899.8" y="305.2" width="3" height="3" fill="#6A3A30" opacity="0.55"/><rect x="909.8" y="305.2" width="3" height="3" fill="#E8A060" opacity="0.55"/><rect x="923.1" y="305.2" width="3" height="3" fill="#6A3A30" opacity="0.55"/><rect x="929.8" y="305.2" width="3" height="3" fill="#D89060" opacity="0.55"/><rect x="936.4" y="305.2" width="3" height="3" fill="#8A3A2A" opacity="0.55"/><rect x="943.1" y="305.2" width="3" height="3" fill="#8A3A2A" opacity="0.55"/><rect x="946.4" y="305.2" width="3" height="3" fill="#C88A5A" opacity="0.55"/><rect x="949.8" y="305.2" width="3" height="3" fill="#C88A5A" opacity="0.55"/><rect x="956.4" y="305.2" width="3" height="3" fill="#A8502A" opacity="0.55"/><rect x="959.7" y="305.2" width="3" height="3" fill="#B05A3A" opacity="0.55"/><rect x="963.1" y="305.2" width="3" height="3" fill="#E0863E" opacity="0.55"/><rect x="966.4" y="305.2" width="3" height="3" fill="#A8502A" opacity="0.55"/><rect x="969.7" y="305.2" width="3" height="3" fill="#E0863E" opacity="0.55"/><rect x="976.4" y="305.2" width="3" height="3" fill="#A8502A" opacity="0.55"/><rect x="979.7" y="305.2" width="3" height="3" fill="#E0863E" opacity="0.55"/><rect x="986.4" y="305.2" width="3" height="3" fill="#E8A060" opacity="0.55"/><rect x="989.7" y="305.2" width="3" height="3" fill="#D2702E" opacity="0.55"/><rect x="833.2" y="308.5" width="3" height="3" fill="#E8A060" opacity="0.55"/><rect x="839.9" y="308.5" width="3" height="3" fill="#D89060" opacity="0.55"/><rect x="843.2" y="308.5" width="3" height="3" fill="#E0863E" opacity="0.55"/><rect x="849.9" y="308.5" width="3" height="3" fill="#E8A060" opacity="0.55"/><rect x="853.2" y="308.5" width="3" height="3" fill="#B05A3A" opacity="0.55"/><rect x="866.5" y="308.5" width="3" height="3" fill="#D2702E" opacity="0.55"/><rect x="869.8" y="308.5" width="3" height="3" fill="#8A3A2A" opacity="0.55"/><rect x="873.2" y="308.5" width="3" height="3" fill="#C88A5A" opacity="0.55"/><rect x="876.5" y="308.5" width="3" height="3" fill="#6A3A30" opacity="0.55"/><rect x="883.2" y="308.5" width="3" height="3" fill="#8A3A2A" opacity="0.55"/><rect x="886.5" y="308.5" width="3" height="3" fill="#B05A3A" opacity="0.55"/><rect x="893.1" y="308.5" width="3" height="3" fill="#B05A3A" opacity="0.55"/><rect x="899.8" y="308.5" width="3" height="3" fill="#6A3A30" opacity="0.55"/><rect x="913.1" y="308.5" width="3" height="3" fill="#C88A5A" opacity="0.55"/><rect x="923.1" y="308.5" width="3" height="3" fill="#E8A060" opacity="0.55"/><rect x="929.8" y="308.5" width="3" height="3" fill="#E0863E" opacity="0.55"/><rect x="936.4" y="308.5" width="3" height="3" fill="#E8A060" opacity="0.55"/><rect x="939.8" y="308.5" width="3" height="3" fill="#C88A5A" opacity="0.55"/><rect x="946.4" y="308.5" width="3" height="3" fill="#D2702E" opacity="0.55"/><rect x="956.4" y="308.5" width="3" height="3" fill="#B05A3A" opacity="0.55"/><rect x="959.7" y="308.5" width="3" height="3" fill="#6A3A30" opacity="0.55"/><rect x="963.1" y="308.5" width="3" height="3" fill="#6A3A30" opacity="0.55"/><rect x="966.4" y="308.5" width="3" height="3" fill="#A8502A" opacity="0.55"/><rect x="969.7" y="308.5" width="3" height="3" fill="#A8502A" opacity="0.55"/><rect x="976.4" y="308.5" width="3" height="3" fill="#C88A5A" opacity="0.55"/><rect x="979.7" y="308.5" width="3" height="3" fill="#A8502A" opacity="0.55"/><rect x="983.1" y="308.5" width="3" height="3" fill="#E8A060" opacity="0.55"/><rect x="986.4" y="308.5" width="3" height="3" fill="#B05A3A" opacity="0.55"/><rect x="989.7" y="308.5" width="3" height="3" fill="#D2702E" opacity="0.55"/><rect x="833.2" y="311.8" width="3" height="3" fill="#6A3A30" opacity="0.55"/><rect x="836.5" y="311.8" width="3" height="3" fill="#8A3A2A" opacity="0.55"/><rect x="839.9" y="311.8" width="3" height="3" fill="#E0863E" opacity="0.55"/><rect x="843.2" y="311.8" width="3" height="3" fill="#D89060" opacity="0.55"/><rect x="849.9" y="311.8" width="3" height="3" fill="#D2702E" opacity="0.55"/><rect x="853.2" y="311.8" width="3" height="3" fill="#C88A5A" opacity="0.55"/><rect x="856.5" y="311.8" width="3" height="3" fill="#8A3A2A" opacity="0.55"/><rect x="863.2" y="311.8" width="3" height="3" fill="#B05A3A" opacity="0.55"/><rect x="873.2" y="311.8" width="3" height="3" fill="#8A3A2A" opacity="0.55"/><rect x="876.5" y="311.8" width="3" height="3" fill="#D2702E" opacity="0.55"/><rect x="879.8" y="311.8" width="3" height="3" fill="#C88A5A" opacity="0.55"/><rect x="886.5" y="311.8" width="3" height="3" fill="#E8A060" opacity="0.55"/><rect x="896.5" y="311.8" width="3" height="3" fill="#A8502A" opacity="0.55"/><rect x="906.5" y="311.8" width="3" height="3" fill="#8A3A2A" opacity="0.55"/><rect x="913.1" y="311.8" width="3" height="3" fill="#8A3A2A" opacity="0.55"/><rect x="916.5" y="311.8" width="3" height="3" fill="#8A3A2A" opacity="0.55"/><rect x="919.8" y="311.8" width="3" height="3" fill="#D2702E" opacity="0.55"/><rect x="923.1" y="311.8" width="3" height="3" fill="#E0863E" opacity="0.55"/><rect x="929.8" y="311.8" width="3" height="3" fill="#8A3A2A" opacity="0.55"/><rect x="933.1" y="311.8" width="3" height="3" fill="#E8A060" opacity="0.55"/><rect x="949.8" y="311.8" width="3" height="3" fill="#8A3A2A" opacity="0.55"/><rect x="953.1" y="311.8" width="3" height="3" fill="#E8A060" opacity="0.55"/><rect x="956.4" y="311.8" width="3" height="3" fill="#A8502A" opacity="0.55"/><rect x="959.7" y="311.8" width="3" height="3" fill="#C88A5A" opacity="0.55"/><rect x="963.1" y="311.8" width="3" height="3" fill="#E0863E" opacity="0.55"/><rect x="969.7" y="311.8" width="3" height="3" fill="#E8A060" opacity="0.55"/><rect x="976.4" y="311.8" width="3" height="3" fill="#A8502A" opacity="0.55"/><rect x="983.1" y="311.8" width="3" height="3" fill="#E0863E" opacity="0.55"/><rect x="986.4" y="311.8" width="3" height="3" fill="#8A3A2A" opacity="0.55"/><rect x="989.7" y="311.8" width="3" height="3" fill="#E8A060" opacity="0.55"/><rect x="833.2" y="315.2" width="3" height="3" fill="#E8A060" opacity="0.55"/><rect x="846.5" y="315.2" width="3" height="3" fill="#D89060" opacity="0.55"/><rect x="849.9" y="315.2" width="3" height="3" fill="#6A3A30" opacity="0.55"/><rect x="856.5" y="315.2" width="3" height="3" fill="#D89060" opacity="0.55"/><rect x="863.2" y="315.2" width="3" height="3" fill="#A8502A" opacity="0.55"/><rect x="866.5" y="315.2" width="3" height="3" fill="#C88A5A" opacity="0.55"/><rect x="869.8" y="315.2" width="3" height="3" fill="#C88A5A" opacity="0.55"/><rect x="873.2" y="315.2" width="3" height="3" fill="#6A3A30" opacity="0.55"/><rect x="876.5" y="315.2" width="3" height="3" fill="#C88A5A" opacity="0.55"/><rect x="879.8" y="315.2" width="3" height="3" fill="#E8A060" opacity="0.55"/><rect x="883.2" y="315.2" width="3" height="3" fill="#E0863E" opacity="0.55"/><rect x="886.5" y="315.2" width="3" height="3" fill="#E8A060" opacity="0.55"/><rect x="889.8" y="315.2" width="3" height="3" fill="#6A3A30" opacity="0.55"/><rect x="893.1" y="315.2" width="3" height="3" fill="#8A3A2A" opacity="0.55"/><rect x="896.5" y="315.2" width="3" height="3" fill="#6A3A30" opacity="0.55"/><rect x="899.8" y="315.2" width="3" height="3" fill="#6A3A30" opacity="0.55"/><rect x="909.8" y="315.2" width="3" height="3" fill="#E8A060" opacity="0.55"/><rect x="913.1" y="315.2" width="3" height="3" fill="#A8502A" opacity="0.55"/><rect x="926.4" y="315.2" width="3" height="3" fill="#6A3A30" opacity="0.55"/><rect x="933.1" y="315.2" width="3" height="3" fill="#E8A060" opacity="0.55"/><rect x="936.4" y="315.2" width="3" height="3" fill="#A8502A" opacity="0.55"/><rect x="946.4" y="315.2" width="3" height="3" fill="#D2702E" opacity="0.55"/><rect x="953.1" y="315.2" width="3" height="3" fill="#8A3A2A" opacity="0.55"/><rect x="959.7" y="315.2" width="3" height="3" fill="#E0863E" opacity="0.55"/><rect x="963.1" y="315.2" width="3" height="3" fill="#B05A3A" opacity="0.55"/><rect x="969.7" y="315.2" width="3" height="3" fill="#6A3A30" opacity="0.55"/><rect x="976.4" y="315.2" width="3" height="3" fill="#A8502A" opacity="0.55"/><rect x="979.7" y="315.2" width="3" height="3" fill="#8A3A2A" opacity="0.55"/><rect x="983.1" y="315.2" width="3" height="3" fill="#8A3A2A" opacity="0.55"/><rect x="986.4" y="315.2" width="3" height="3" fill="#A8502A" opacity="0.55"/><rect x="989.7" y="315.2" width="3" height="3" fill="#E0863E" opacity="0.55"/><rect x="833.2" y="318.5" width="3" height="3" fill="#D89060" opacity="0.55"/><rect x="839.9" y="318.5" width="3" height="3" fill="#A8502A" opacity="0.55"/><rect x="846.5" y="318.5" width="3" height="3" fill="#8A3A2A" opacity="0.55"/><rect x="853.2" y="318.5" width="3" height="3" fill="#E0863E" opacity="0.55"/><rect x="856.5" y="318.5" width="3" height="3" fill="#E8A060" opacity="0.55"/><rect x="863.2" y="318.5" width="3" height="3" fill="#D89060" opacity="0.55"/><rect x="866.5" y="318.5" width="3" height="3" fill="#C88A5A" opacity="0.55"/><rect x="869.8" y="318.5" width="3" height="3" fill="#C88A5A" opacity="0.55"/><rect x="873.2" y="318.5" width="3" height="3" fill="#6A3A30" opacity="0.55"/><rect x="876.5" y="318.5" width="3" height="3" fill="#E8A060" opacity="0.55"/><rect x="879.8" y="318.5" width="3" height="3" fill="#B05A3A" opacity="0.55"/><rect x="889.8" y="318.5" width="3" height="3" fill="#B05A3A" opacity="0.55"/><rect x="896.5" y="318.5" width="3" height="3" fill="#B05A3A" opacity="0.55"/><rect x="899.8" y="318.5" width="3" height="3" fill="#B05A3A" opacity="0.55"/><rect x="903.1" y="318.5" width="3" height="3" fill="#D2702E" opacity="0.55"/><rect x="909.8" y="318.5" width="3" height="3" fill="#D2702E" opacity="0.55"/><rect x="913.1" y="318.5" width="3" height="3" fill="#D89060" opacity="0.55"/><rect x="916.5" y="318.5" width="3" height="3" fill="#E0863E" opacity="0.55"/><rect x="926.4" y="318.5" width="3" height="3" fill="#E8A060" opacity="0.55"/><rect x="929.8" y="318.5" width="3" height="3" fill="#D89060" opacity="0.55"/><rect x="936.4" y="318.5" width="3" height="3" fill="#6A3A30" opacity="0.55"/><rect x="939.8" y="318.5" width="3" height="3" fill="#A8502A" opacity="0.55"/><rect x="949.8" y="318.5" width="3" height="3" fill="#D2702E" opacity="0.55"/><rect x="956.4" y="318.5" width="3" height="3" fill="#B05A3A" opacity="0.55"/><rect x="963.1" y="318.5" width="3" height="3" fill="#A8502A" opacity="0.55"/><rect x="966.4" y="318.5" width="3" height="3" fill="#8A3A2A" opacity="0.55"/><rect x="973.1" y="318.5" width="3" height="3" fill="#C88A5A" opacity="0.55"/><rect x="979.7" y="318.5" width="3" height="3" fill="#C88A5A" opacity="0.55"/><rect x="983.1" y="318.5" width="3" height="3" fill="#B05A3A" opacity="0.55"/><rect x="989.7" y="318.5" width="3" height="3" fill="#B05A3A" opacity="0.55"/><rect x="839.9" y="321.8" width="3" height="3" fill="#E8A060" opacity="0.55"/><rect x="846.5" y="321.8" width="3" height="3" fill="#C88A5A" opacity="0.55"/><rect x="849.9" y="321.8" width="3" height="3" fill="#A8502A" opacity="0.55"/><rect x="856.5" y="321.8" width="3" height="3" fill="#E0863E" opacity="0.55"/><rect x="859.8" y="321.8" width="3" height="3" fill="#B05A3A" opacity="0.55"/><rect x="863.2" y="321.8" width="3" height="3" fill="#8A6A8A" opacity="0.55"/><rect x="866.5" y="321.8" width="3" height="3" fill="#4A5A7A" opacity="0.55"/><rect x="869.8" y="321.8" width="3" height="3" fill="#E8A060" opacity="0.55"/><rect x="879.8" y="321.8" width="3" height="3" fill="#4A5A7A" opacity="0.55"/><rect x="886.5" y="321.8" width="3" height="3" fill="#E8A060" opacity="0.55"/><rect x="889.8" y="321.8" width="3" height="3" fill="#8A6A8A" opacity="0.55"/><rect x="893.1" y="321.8" width="3" height="3" fill="#E8A060" opacity="0.55"/><rect x="903.1" y="321.8" width="3" height="3" fill="#4A5A7A" opacity="0.55"/><rect x="909.8" y="321.8" width="3" height="3" fill="#4A5A7A" opacity="0.55"/><rect x="913.1" y="321.8" width="3" height="3" fill="#8A3A2A" opacity="0.55"/><rect x="916.5" y="321.8" width="3" height="3" fill="#6A4A6A" opacity="0.55"/><rect x="919.8" y="321.8" width="3" height="3" fill="#6A4A6A" opacity="0.55"/><rect x="923.1" y="321.8" width="3" height="3" fill="#C88A5A" opacity="0.55"/><rect x="933.1" y="321.8" width="3" height="3" fill="#D89060" opacity="0.55"/><rect x="936.4" y="321.8" width="3" height="3" fill="#B05A3A" opacity="0.55"/><rect x="939.8" y="321.8" width="3" height="3" fill="#5A5A7A" opacity="0.55"/><rect x="946.4" y="321.8" width="3" height="3" fill="#6A4A6A" opacity="0.55"/><rect x="953.1" y="321.8" width="3" height="3" fill="#E0863E" opacity="0.55"/><rect x="956.4" y="321.8" width="3" height="3" fill="#6A4A6A" opacity="0.55"/><rect x="959.7" y="321.8" width="3" height="3" fill="#D89060" opacity="0.55"/><rect x="963.1" y="321.8" width="3" height="3" fill="#A8502A" opacity="0.55"/><rect x="969.7" y="321.8" width="3" height="3" fill="#B05A3A" opacity="0.55"/><rect x="976.4" y="321.8" width="3" height="3" fill="#8A6A8A" opacity="0.55"/><rect x="983.1" y="321.8" width="3" height="3" fill="#5A5A7A" opacity="0.55"/><rect x="989.7" y="321.8" width="3" height="3" fill="#C88A5A" opacity="0.55"/><rect x="836.5" y="325.1" width="3" height="3" fill="#6A3A30" opacity="0.55"/><rect x="839.9" y="325.1" width="3" height="3" fill="#6A4A6A" opacity="0.55"/><rect x="846.5" y="325.1" width="3" height="3" fill="#6A4A6A" opacity="0.55"/><rect x="849.9" y="325.1" width="3" height="3" fill="#8A3A2A" opacity="0.55"/><rect x="853.2" y="325.1" width="3" height="3" fill="#8A6A8A" opacity="0.55"/><rect x="863.2" y="325.1" width="3" height="3" fill="#D89060" opacity="0.55"/><rect x="866.5" y="325.1" width="3" height="3" fill="#E0863E" opacity="0.55"/><rect x="869.8" y="325.1" width="3" height="3" fill="#8A3A2A" opacity="0.55"/><rect x="879.8" y="325.1" width="3" height="3" fill="#D2702E" opacity="0.55"/><rect x="893.1" y="325.1" width="3" height="3" fill="#A8502A" opacity="0.55"/><rect x="906.5" y="325.1" width="3" height="3" fill="#E0863E" opacity="0.55"/><rect x="909.8" y="325.1" width="3" height="3" fill="#D2702E" opacity="0.55"/><rect x="913.1" y="325.1" width="3" height="3" fill="#8A3A2A" opacity="0.55"/><rect x="916.5" y="325.1" width="3" height="3" fill="#D2702E" opacity="0.55"/><rect x="919.8" y="325.1" width="3" height="3" fill="#6A4A6A" opacity="0.55"/><rect x="929.8" y="325.1" width="3" height="3" fill="#D2702E" opacity="0.55"/><rect x="933.1" y="325.1" width="3" height="3" fill="#C88A5A" opacity="0.55"/><rect x="939.8" y="325.1" width="3" height="3" fill="#4A5A7A" opacity="0.55"/><rect x="943.1" y="325.1" width="3" height="3" fill="#E0863E" opacity="0.55"/><rect x="946.4" y="325.1" width="3" height="3" fill="#E0863E" opacity="0.55"/><rect x="949.8" y="325.1" width="3" height="3" fill="#E8A060" opacity="0.55"/><rect x="953.1" y="325.1" width="3" height="3" fill="#B05A3A" opacity="0.55"/><rect x="956.4" y="325.1" width="3" height="3" fill="#E0863E" opacity="0.55"/><rect x="963.1" y="325.1" width="3" height="3" fill="#D2702E" opacity="0.55"/><rect x="966.4" y="325.1" width="3" height="3" fill="#D89060" opacity="0.55"/><rect x="969.7" y="325.1" width="3" height="3" fill="#D2702E" opacity="0.55"/><rect x="976.4" y="325.1" width="3" height="3" fill="#5A5A7A" opacity="0.55"/><rect x="983.1" y="325.1" width="3" height="3" fill="#B05A3A" opacity="0.55"/><rect x="986.4" y="325.1" width="3" height="3" fill="#B05A3A" opacity="0.55"/><rect x="989.7" y="325.1" width="3" height="3" fill="#6A4A6A" opacity="0.55"/><rect x="839.9" y="328.5" width="3" height="3" fill="#5A5A7A" opacity="0.55"/><rect x="843.2" y="328.5" width="3" height="3" fill="#D89060" opacity="0.55"/><rect x="846.5" y="328.5" width="3" height="3" fill="#8A6A8A" opacity="0.55"/><rect x="849.9" y="328.5" width="3" height="3" fill="#D2702E" opacity="0.55"/><rect x="853.2" y="328.5" width="3" height="3" fill="#4A5A7A" opacity="0.55"/><rect x="856.5" y="328.5" width="3" height="3" fill="#D89060" opacity="0.55"/><rect x="859.8" y="328.5" width="3" height="3" fill="#8A3A2A" opacity="0.55"/><rect x="866.5" y="328.5" width="3" height="3" fill="#E0863E" opacity="0.55"/><rect x="876.5" y="328.5" width="3" height="3" fill="#D89060" opacity="0.55"/><rect x="883.2" y="328.5" width="3" height="3" fill="#C88A5A" opacity="0.55"/><rect x="889.8" y="328.5" width="3" height="3" fill="#8A3A2A" opacity="0.55"/><rect x="896.5" y="328.5" width="3" height="3" fill="#A8502A" opacity="0.55"/><rect x="899.8" y="328.5" width="3" height="3" fill="#E8A060" opacity="0.55"/><rect x="909.8" y="328.5" width="3" height="3" fill="#C88A5A" opacity="0.55"/><rect x="913.1" y="328.5" width="3" height="3" fill="#5A5A7A" opacity="0.55"/><rect x="939.8" y="328.5" width="3" height="3" fill="#8A6A8A" opacity="0.55"/><rect x="943.1" y="328.5" width="3" height="3" fill="#E0863E" opacity="0.55"/><rect x="946.4" y="328.5" width="3" height="3" fill="#8A3A2A" opacity="0.55"/><rect x="949.8" y="328.5" width="3" height="3" fill="#4A5A7A" opacity="0.55"/><rect x="953.1" y="328.5" width="3" height="3" fill="#6A4A6A" opacity="0.55"/><rect x="956.4" y="328.5" width="3" height="3" fill="#6A3A30" opacity="0.55"/><rect x="959.7" y="328.5" width="3" height="3" fill="#6A3A30" opacity="0.55"/><rect x="963.1" y="328.5" width="3" height="3" fill="#8A3A2A" opacity="0.55"/><rect x="966.4" y="328.5" width="3" height="3" fill="#B05A3A" opacity="0.55"/><rect x="973.1" y="328.5" width="3" height="3" fill="#8A6A8A" opacity="0.55"/><rect x="976.4" y="328.5" width="3" height="3" fill="#8A6A8A" opacity="0.55"/><rect x="979.7" y="328.5" width="3" height="3" fill="#E0863E" opacity="0.55"/><rect x="983.1" y="328.5" width="3" height="3" fill="#A8502A" opacity="0.55"/><rect x="833.2" y="331.8" width="3" height="3" fill="#6A4A6A" opacity="0.55"/><rect x="839.9" y="331.8" width="3" height="3" fill="#8A3A2A" opacity="0.55"/><rect x="846.5" y="331.8" width="3" height="3" fill="#8A6A8A" opacity="0.55"/><rect x="849.9" y="331.8" width="3" height="3" fill="#E8A060" opacity="0.55"/><rect x="853.2" y="331.8" width="3" height="3" fill="#6A4A6A" opacity="0.55"/><rect x="856.5" y="331.8" width="3" height="3" fill="#D2702E" opacity="0.55"/><rect x="859.8" y="331.8" width="3" height="3" fill="#8A6A8A" opacity="0.55"/><rect x="863.2" y="331.8" width="3" height="3" fill="#8A6A8A" opacity="0.55"/><rect x="866.5" y="331.8" width="3" height="3" fill="#E8A060" opacity="0.55"/><rect x="876.5" y="331.8" width="3" height="3" fill="#D89060" opacity="0.55"/><rect x="879.8" y="331.8" width="3" height="3" fill="#6A3A30" opacity="0.55"/><rect x="886.5" y="331.8" width="3" height="3" fill="#D2702E" opacity="0.55"/><rect x="889.8" y="331.8" width="3" height="3" fill="#B05A3A" opacity="0.55"/><rect x="893.1" y="331.8" width="3" height="3" fill="#A8502A" opacity="0.55"/><rect x="896.5" y="331.8" width="3" height="3" fill="#6A3A30" opacity="0.55"/><rect x="903.1" y="331.8" width="3" height="3" fill="#A8502A" opacity="0.55"/><rect x="906.5" y="331.8" width="3" height="3" fill="#8A6A8A" opacity="0.55"/><rect x="909.8" y="331.8" width="3" height="3" fill="#6A3A30" opacity="0.55"/><rect x="913.1" y="331.8" width="3" height="3" fill="#C88A5A" opacity="0.55"/><rect x="916.5" y="331.8" width="3" height="3" fill="#E8A060" opacity="0.55"/><rect x="919.8" y="331.8" width="3" height="3" fill="#D2702E" opacity="0.55"/><rect x="923.1" y="331.8" width="3" height="3" fill="#C88A5A" opacity="0.55"/><rect x="929.8" y="331.8" width="3" height="3" fill="#E8A060" opacity="0.55"/><rect x="936.4" y="331.8" width="3" height="3" fill="#E0863E" opacity="0.55"/><rect x="949.8" y="331.8" width="3" height="3" fill="#A8502A" opacity="0.55"/><rect x="956.4" y="331.8" width="3" height="3" fill="#8A6A8A" opacity="0.55"/><rect x="959.7" y="331.8" width="3" height="3" fill="#A8502A" opacity="0.55"/><rect x="963.1" y="331.8" width="3" height="3" fill="#D2702E" opacity="0.55"/><rect x="966.4" y="331.8" width="3" height="3" fill="#6A4A6A" opacity="0.55"/><rect x="969.7" y="331.8" width="3" height="3" fill="#B05A3A" opacity="0.55"/><rect x="979.7" y="331.8" width="3" height="3" fill="#A8502A" opacity="0.55"/><rect x="983.1" y="331.8" width="3" height="3" fill="#B05A3A" opacity="0.55"/><rect x="989.7" y="331.8" width="3" height="3" fill="#5A5A7A" opacity="0.55"/><rect x="839.9" y="335.1" width="3" height="3" fill="#B05A3A" opacity="0.55"/><rect x="843.2" y="335.1" width="3" height="3" fill="#E8A060" opacity="0.55"/><rect x="846.5" y="335.1" width="3" height="3" fill="#4A5A7A" opacity="0.55"/><rect x="849.9" y="335.1" width="3" height="3" fill="#5A5A7A" opacity="0.55"/><rect x="853.2" y="335.1" width="3" height="3" fill="#E8A060" opacity="0.55"/><rect x="859.8" y="335.1" width="3" height="3" fill="#8A6A8A" opacity="0.55"/><rect x="863.2" y="335.1" width="3" height="3" fill="#4A5A7A" opacity="0.55"/><rect x="869.8" y="335.1" width="3" height="3" fill="#D89060" opacity="0.55"/><rect x="876.5" y="335.1" width="3" height="3" fill="#5A5A7A" opacity="0.55"/><rect x="879.8" y="335.1" width="3" height="3" fill="#C88A5A" opacity="0.55"/><rect x="883.2" y="335.1" width="3" height="3" fill="#E8A060" opacity="0.55"/><rect x="889.8" y="335.1" width="3" height="3" fill="#8A3A2A" opacity="0.55"/><rect x="893.1" y="335.1" width="3" height="3" fill="#4A5A7A" opacity="0.55"/><rect x="899.8" y="335.1" width="3" height="3" fill="#D2702E" opacity="0.55"/><rect x="906.5" y="335.1" width="3" height="3" fill="#6A3A30" opacity="0.55"/><rect x="923.1" y="335.1" width="3" height="3" fill="#E0863E" opacity="0.55"/><rect x="926.4" y="335.1" width="3" height="3" fill="#6A3A30" opacity="0.55"/><rect x="929.8" y="335.1" width="3" height="3" fill="#8A6A8A" opacity="0.55"/><rect x="933.1" y="335.1" width="3" height="3" fill="#6A4A6A" opacity="0.55"/><rect x="936.4" y="335.1" width="3" height="3" fill="#6A3A30" opacity="0.55"/><rect x="939.8" y="335.1" width="3" height="3" fill="#E0863E" opacity="0.55"/><rect x="943.1" y="335.1" width="3" height="3" fill="#C88A5A" opacity="0.55"/><rect x="953.1" y="335.1" width="3" height="3" fill="#5A5A7A" opacity="0.55"/><rect x="956.4" y="335.1" width="3" height="3" fill="#5A5A7A" opacity="0.55"/><rect x="959.7" y="335.1" width="3" height="3" fill="#6A3A30" opacity="0.55"/><rect x="963.1" y="335.1" width="3" height="3" fill="#8A6A8A" opacity="0.55"/><rect x="966.4" y="335.1" width="3" height="3" fill="#A8502A" opacity="0.55"/><rect x="969.7" y="335.1" width="3" height="3" fill="#8A6A8A" opacity="0.55"/><rect x="986.4" y="335.1" width="3" height="3" fill="#D2702E" opacity="0.55"/><rect x="989.7" y="335.1" width="3" height="3" fill="#8A3A2A" opacity="0.55"/><rect x="839.9" y="338.5" width="3" height="3" fill="#8A3A2A" opacity="0.55"/><rect x="843.2" y="338.5" width="3" height="3" fill="#E0863E" opacity="0.55"/><rect x="846.5" y="338.5" width="3" height="3" fill="#A8502A" opacity="0.55"/><rect x="853.2" y="338.5" width="3" height="3" fill="#B05A3A" opacity="0.55"/><rect x="856.5" y="338.5" width="3" height="3" fill="#C88A5A" opacity="0.55"/><rect x="869.8" y="338.5" width="3" height="3" fill="#D2702E" opacity="0.55"/><rect x="876.5" y="338.5" width="3" height="3" fill="#B05A3A" opacity="0.55"/><rect x="883.2" y="338.5" width="3" height="3" fill="#B05A3A" opacity="0.55"/><rect x="889.8" y="338.5" width="3" height="3" fill="#D2702E" opacity="0.55"/><rect x="893.1" y="338.5" width="3" height="3" fill="#6A3A30" opacity="0.55"/><rect x="896.5" y="338.5" width="3" height="3" fill="#B05A3A" opacity="0.55"/><rect x="899.8" y="338.5" width="3" height="3" fill="#5A5A7A" opacity="0.55"/><rect x="903.1" y="338.5" width="3" height="3" fill="#E8A060" opacity="0.55"/><rect x="906.5" y="338.5" width="3" height="3" fill="#E0863E" opacity="0.55"/><rect x="909.8" y="338.5" width="3" height="3" fill="#C88A5A" opacity="0.55"/><rect x="913.1" y="338.5" width="3" height="3" fill="#8A3A2A" opacity="0.55"/><rect x="916.5" y="338.5" width="3" height="3" fill="#8A3A2A" opacity="0.55"/><rect x="929.8" y="338.5" width="3" height="3" fill="#6A4A6A" opacity="0.55"/><rect x="933.1" y="338.5" width="3" height="3" fill="#8A6A8A" opacity="0.55"/><rect x="943.1" y="338.5" width="3" height="3" fill="#6A4A6A" opacity="0.55"/><rect x="953.1" y="338.5" width="3" height="3" fill="#8A3A2A" opacity="0.55"/><rect x="956.4" y="338.5" width="3" height="3" fill="#E0863E" opacity="0.55"/><rect x="959.7" y="338.5" width="3" height="3" fill="#D2702E" opacity="0.55"/><rect x="963.1" y="338.5" width="3" height="3" fill="#4A5A7A" opacity="0.55"/><rect x="966.4" y="338.5" width="3" height="3" fill="#D89060" opacity="0.55"/><rect x="969.7" y="338.5" width="3" height="3" fill="#6A4A6A" opacity="0.55"/><rect x="976.4" y="338.5" width="3" height="3" fill="#C88A5A" opacity="0.55"/><rect x="979.7" y="338.5" width="3" height="3" fill="#6A3A30" opacity="0.55"/><rect x="983.1" y="338.5" width="3" height="3" fill="#8A6A8A" opacity="0.55"/><rect x="986.4" y="338.5" width="3" height="3" fill="#D2702E" opacity="0.55"/><rect x="989.7" y="338.5" width="3" height="3" fill="#5A5A7A" opacity="0.55"/><rect x="836.5" y="341.8" width="3" height="3" fill="#6A4A6A" opacity="0.55"/><rect x="839.9" y="341.8" width="3" height="3" fill="#B05A3A" opacity="0.55"/><rect x="846.5" y="341.8" width="3" height="3" fill="#C88A5A" opacity="0.55"/><rect x="849.9" y="341.8" width="3" height="3" fill="#5A5A7A" opacity="0.55"/><rect x="856.5" y="341.8" width="3" height="3" fill="#5A5A7A" opacity="0.55"/><rect x="863.2" y="341.8" width="3" height="3" fill="#B05A3A" opacity="0.55"/><rect x="866.5" y="341.8" width="3" height="3" fill="#D2702E" opacity="0.55"/><rect x="869.8" y="341.8" width="3" height="3" fill="#D2702E" opacity="0.55"/><rect x="886.5" y="341.8" width="3" height="3" fill="#D89060" opacity="0.55"/><rect x="889.8" y="341.8" width="3" height="3" fill="#A8502A" opacity="0.55"/><rect x="896.5" y="341.8" width="3" height="3" fill="#4A5A7A" opacity="0.55"/><rect x="899.8" y="341.8" width="3" height="3" fill="#E0863E" opacity="0.55"/><rect x="903.1" y="341.8" width="3" height="3" fill="#8A6A8A" opacity="0.55"/><rect x="913.1" y="341.8" width="3" height="3" fill="#8A3A2A" opacity="0.55"/><rect x="919.8" y="341.8" width="3" height="3" fill="#D2702E" opacity="0.55"/><rect x="923.1" y="341.8" width="3" height="3" fill="#8A6A8A" opacity="0.55"/><rect x="926.4" y="341.8" width="3" height="3" fill="#6A4A6A" opacity="0.55"/><rect x="929.8" y="341.8" width="3" height="3" fill="#E0863E" opacity="0.55"/><rect x="933.1" y="341.8" width="3" height="3" fill="#6A4A6A" opacity="0.55"/><rect x="939.8" y="341.8" width="3" height="3" fill="#E8A060" opacity="0.55"/><rect x="946.4" y="341.8" width="3" height="3" fill="#D2702E" opacity="0.55"/><rect x="949.8" y="341.8" width="3" height="3" fill="#E0863E" opacity="0.55"/><rect x="953.1" y="341.8" width="3" height="3" fill="#E8A060" opacity="0.55"/><rect x="963.1" y="341.8" width="3" height="3" fill="#5A5A7A" opacity="0.55"/><rect x="969.7" y="341.8" width="3" height="3" fill="#A8502A" opacity="0.55"/><rect x="976.4" y="341.8" width="3" height="3" fill="#4A5A7A" opacity="0.55"/><rect x="979.7" y="341.8" width="3" height="3" fill="#C88A5A" opacity="0.55"/><rect x="986.4" y="341.8" width="3" height="3" fill="#E8A060" opacity="0.55"/><rect x="989.7" y="341.8" width="3" height="3" fill="#A8502A" opacity="0.55"/><rect x="836.5" y="345.1" width="3" height="3" fill="#8A3A2A" opacity="0.55"/><rect x="839.9" y="345.1" width="3" height="3" fill="#6A4A6A" opacity="0.55"/><rect x="843.2" y="345.1" width="3" height="3" fill="#6A3A30" opacity="0.55"/><rect x="846.5" y="345.1" width="3" height="3" fill="#4A5A7A" opacity="0.55"/><rect x="849.9" y="345.1" width="3" height="3" fill="#4A5A7A" opacity="0.55"/><rect x="856.5" y="345.1" width="3" height="3" fill="#B05A3A" opacity="0.55"/><rect x="869.8" y="345.1" width="3" height="3" fill="#4A5A7A" opacity="0.55"/><rect x="873.2" y="345.1" width="3" height="3" fill="#6A4A6A" opacity="0.55"/><rect x="883.2" y="345.1" width="3" height="3" fill="#5A5A7A" opacity="0.55"/><rect x="886.5" y="345.1" width="3" height="3" fill="#B05A3A" opacity="0.55"/><rect x="896.5" y="345.1" width="3" height="3" fill="#8A3A2A" opacity="0.55"/><rect x="906.5" y="345.1" width="3" height="3" fill="#6A3A30" opacity="0.55"/><rect x="909.8" y="345.1" width="3" height="3" fill="#D89060" opacity="0.55"/><rect x="916.5" y="345.1" width="3" height="3" fill="#8A6A8A" opacity="0.55"/><rect x="919.8" y="345.1" width="3" height="3" fill="#4A5A7A" opacity="0.55"/><rect x="926.4" y="345.1" width="3" height="3" fill="#4A5A7A" opacity="0.55"/><rect x="929.8" y="345.1" width="3" height="3" fill="#E0863E" opacity="0.55"/><rect x="933.1" y="345.1" width="3" height="3" fill="#4A5A7A" opacity="0.55"/><rect x="936.4" y="345.1" width="3" height="3" fill="#E8A060" opacity="0.55"/><rect x="939.8" y="345.1" width="3" height="3" fill="#5A5A7A" opacity="0.55"/><rect x="943.1" y="345.1" width="3" height="3" fill="#B05A3A" opacity="0.55"/><rect x="949.8" y="345.1" width="3" height="3" fill="#5A5A7A" opacity="0.55"/><rect x="966.4" y="345.1" width="3" height="3" fill="#6A4A6A" opacity="0.55"/><rect x="973.1" y="345.1" width="3" height="3" fill="#B05A3A" opacity="0.55"/><rect x="976.4" y="345.1" width="3" height="3" fill="#D2702E" opacity="0.55"/><rect x="989.7" y="345.1" width="3" height="3" fill="#D89060" opacity="0.55"/><rect x="839.9" y="348.5" width="3" height="3" fill="#D89060" opacity="0.55"/><rect x="843.2" y="348.5" width="3" height="3" fill="#A8502A" opacity="0.55"/><rect x="846.5" y="348.5" width="3" height="3" fill="#5A5A7A" opacity="0.55"/><rect x="849.9" y="348.5" width="3" height="3" fill="#6A3A30" opacity="0.55"/><rect x="853.2" y="348.5" width="3" height="3" fill="#5A5A7A" opacity="0.55"/><rect x="856.5" y="348.5" width="3" height="3" fill="#E8A060" opacity="0.55"/><rect x="859.8" y="348.5" width="3" height="3" fill="#6A3A30" opacity="0.55"/><rect x="863.2" y="348.5" width="3" height="3" fill="#E8A060" opacity="0.55"/><rect x="866.5" y="348.5" width="3" height="3" fill="#E0863E" opacity="0.55"/><rect x="873.2" y="348.5" width="3" height="3" fill="#8A6A8A" opacity="0.55"/><rect x="876.5" y="348.5" width="3" height="3" fill="#E0863E" opacity="0.55"/><rect x="879.8" y="348.5" width="3" height="3" fill="#D2702E" opacity="0.55"/><rect x="886.5" y="348.5" width="3" height="3" fill="#8A6A8A" opacity="0.55"/><rect x="889.8" y="348.5" width="3" height="3" fill="#B05A3A" opacity="0.55"/><rect x="893.1" y="348.5" width="3" height="3" fill="#4A5A7A" opacity="0.55"/><rect x="896.5" y="348.5" width="3" height="3" fill="#C88A5A" opacity="0.55"/><rect x="899.8" y="348.5" width="3" height="3" fill="#E0863E" opacity="0.55"/><rect x="906.5" y="348.5" width="3" height="3" fill="#5A5A7A" opacity="0.55"/><rect x="916.5" y="348.5" width="3" height="3" fill="#4A5A7A" opacity="0.55"/><rect x="923.1" y="348.5" width="3" height="3" fill="#A8502A" opacity="0.55"/><rect x="926.4" y="348.5" width="3" height="3" fill="#C88A5A" opacity="0.55"/><rect x="929.8" y="348.5" width="3" height="3" fill="#5A5A7A" opacity="0.55"/><rect x="933.1" y="348.5" width="3" height="3" fill="#C88A5A" opacity="0.55"/><rect x="936.4" y="348.5" width="3" height="3" fill="#8A3A2A" opacity="0.55"/><rect x="943.1" y="348.5" width="3" height="3" fill="#B05A3A" opacity="0.55"/><rect x="949.8" y="348.5" width="3" height="3" fill="#4A5A7A" opacity="0.55"/><rect x="956.4" y="348.5" width="3" height="3" fill="#6A3A30" opacity="0.55"/><rect x="959.7" y="348.5" width="3" height="3" fill="#6A4A6A" opacity="0.55"/><rect x="973.1" y="348.5" width="3" height="3" fill="#5A5A7A" opacity="0.55"/><rect x="983.1" y="348.5" width="3" height="3" fill="#B05A3A" opacity="0.55"/><rect x="986.4" y="348.5" width="3" height="3" fill="#B05A3A" opacity="0.55"/><rect x="989.7" y="348.5" width="3" height="3" fill="#6A4A6A" opacity="0.55"/><rect x="833.2" y="351.8" width="3" height="3" fill="#6A4A6A" opacity="0.55"/><rect x="836.5" y="351.8" width="3" height="3" fill="#C88A5A" opacity="0.55"/><rect x="839.9" y="351.8" width="3" height="3" fill="#6A4A6A" opacity="0.55"/><rect x="843.2" y="351.8" width="3" height="3" fill="#5A5A7A" opacity="0.55"/><rect x="846.5" y="351.8" width="3" height="3" fill="#A8502A" opacity="0.55"/><rect x="849.9" y="351.8" width="3" height="3" fill="#D2702E" opacity="0.55"/><rect x="853.2" y="351.8" width="3" height="3" fill="#4A5A7A" opacity="0.55"/><rect x="859.8" y="351.8" width="3" height="3" fill="#D89060" opacity="0.55"/><rect x="863.2" y="351.8" width="3" height="3" fill="#E0863E" opacity="0.55"/><rect x="866.5" y="351.8" width="3" height="3" fill="#B05A3A" opacity="0.55"/><rect x="873.2" y="351.8" width="3" height="3" fill="#A8502A" opacity="0.55"/><rect x="876.5" y="351.8" width="3" height="3" fill="#4A5A7A" opacity="0.55"/><rect x="883.2" y="351.8" width="3" height="3" fill="#8A3A2A" opacity="0.55"/><rect x="889.8" y="351.8" width="3" height="3" fill="#4A5A7A" opacity="0.55"/><rect x="893.1" y="351.8" width="3" height="3" fill="#4A5A7A" opacity="0.55"/><rect x="896.5" y="351.8" width="3" height="3" fill="#6A3A30" opacity="0.55"/><rect x="899.8" y="351.8" width="3" height="3" fill="#6A3A30" opacity="0.55"/><rect x="903.1" y="351.8" width="3" height="3" fill="#E8A060" opacity="0.55"/><rect x="916.5" y="351.8" width="3" height="3" fill="#D89060" opacity="0.55"/><rect x="919.8" y="351.8" width="3" height="3" fill="#A8502A" opacity="0.55"/><rect x="923.1" y="351.8" width="3" height="3" fill="#B05A3A" opacity="0.55"/><rect x="926.4" y="351.8" width="3" height="3" fill="#E8A060" opacity="0.55"/><rect x="929.8" y="351.8" width="3" height="3" fill="#4A5A7A" opacity="0.55"/><rect x="933.1" y="351.8" width="3" height="3" fill="#D2702E" opacity="0.55"/><rect x="936.4" y="351.8" width="3" height="3" fill="#D2702E" opacity="0.55"/><rect x="946.4" y="351.8" width="3" height="3" fill="#D89060" opacity="0.55"/><rect x="949.8" y="351.8" width="3" height="3" fill="#A8502A" opacity="0.55"/><rect x="953.1" y="351.8" width="3" height="3" fill="#8A3A2A" opacity="0.55"/><rect x="963.1" y="351.8" width="3" height="3" fill="#D2702E" opacity="0.55"/><rect x="966.4" y="351.8" width="3" height="3" fill="#E0863E" opacity="0.55"/><rect x="976.4" y="351.8" width="3" height="3" fill="#4A5A7A" opacity="0.55"/><rect x="979.7" y="351.8" width="3" height="3" fill="#D2702E" opacity="0.55"/><rect x="983.1" y="351.8" width="3" height="3" fill="#4A5A7A" opacity="0.55"/><rect x="986.4" y="351.8" width="3" height="3" fill="#D89060" opacity="0.55"/><rect x="836.5" y="355.1" width="3" height="3" fill="#5A5A7A" opacity="0.55"/><rect x="846.5" y="355.1" width="3" height="3" fill="#B05A3A" opacity="0.55"/><rect x="849.9" y="355.1" width="3" height="3" fill="#E0863E" opacity="0.55"/><rect x="853.2" y="355.1" width="3" height="3" fill="#6A4A6A" opacity="0.55"/><rect x="856.5" y="355.1" width="3" height="3" fill="#5A5A7A" opacity="0.55"/><rect x="859.8" y="355.1" width="3" height="3" fill="#D2702E" opacity="0.55"/><rect x="863.2" y="355.1" width="3" height="3" fill="#6A4A6A" opacity="0.55"/><rect x="866.5" y="355.1" width="3" height="3" fill="#E0863E" opacity="0.55"/><rect x="869.8" y="355.1" width="3" height="3" fill="#6A4A6A" opacity="0.55"/><rect x="873.2" y="355.1" width="3" height="3" fill="#A8502A" opacity="0.55"/><rect x="876.5" y="355.1" width="3" height="3" fill="#B05A3A" opacity="0.55"/><rect x="879.8" y="355.1" width="3" height="3" fill="#B05A3A" opacity="0.55"/><rect x="886.5" y="355.1" width="3" height="3" fill="#8A3A2A" opacity="0.55"/><rect x="889.8" y="355.1" width="3" height="3" fill="#6A4A6A" opacity="0.55"/><rect x="899.8" y="355.1" width="3" height="3" fill="#E0863E" opacity="0.55"/><rect x="906.5" y="355.1" width="3" height="3" fill="#D2702E" opacity="0.55"/><rect x="909.8" y="355.1" width="3" height="3" fill="#E8A060" opacity="0.55"/><rect x="919.8" y="355.1" width="3" height="3" fill="#E8A060" opacity="0.55"/><rect x="923.1" y="355.1" width="3" height="3" fill="#6A4A6A" opacity="0.55"/><rect x="926.4" y="355.1" width="3" height="3" fill="#C88A5A" opacity="0.55"/><rect x="936.4" y="355.1" width="3" height="3" fill="#6A4A6A" opacity="0.55"/><rect x="939.8" y="355.1" width="3" height="3" fill="#B05A3A" opacity="0.55"/><rect x="943.1" y="355.1" width="3" height="3" fill="#A8502A" opacity="0.55"/><rect x="949.8" y="355.1" width="3" height="3" fill="#8A6A8A" opacity="0.55"/><rect x="953.1" y="355.1" width="3" height="3" fill="#8A3A2A" opacity="0.55"/><rect x="956.4" y="355.1" width="3" height="3" fill="#C88A5A" opacity="0.55"/><rect x="959.7" y="355.1" width="3" height="3" fill="#E8A060" opacity="0.55"/><rect x="963.1" y="355.1" width="3" height="3" fill="#5A5A7A" opacity="0.55"/><rect x="966.4" y="355.1" width="3" height="3" fill="#D2702E" opacity="0.55"/><rect x="973.1" y="355.1" width="3" height="3" fill="#6A4A6A" opacity="0.55"/><rect x="979.7" y="355.1" width="3" height="3" fill="#D2702E" opacity="0.55"/><rect x="983.1" y="355.1" width="3" height="3" fill="#8A3A2A" opacity="0.55"/><rect x="986.4" y="355.1" width="3" height="3" fill="#4A5A7A" opacity="0.55"/><rect x="989.7" y="355.1" width="3" height="3" fill="#4A5A7A" opacity="0.55"/><rect x="839.9" y="358.4" width="3" height="3" fill="#8A6A8A" opacity="0.55"/><rect x="843.2" y="358.4" width="3" height="3" fill="#B05A3A" opacity="0.55"/><rect x="846.5" y="358.4" width="3" height="3" fill="#A8502A" opacity="0.55"/><rect x="853.2" y="358.4" width="3" height="3" fill="#E8A060" opacity="0.55"/><rect x="859.8" y="358.4" width="3" height="3" fill="#8A6A8A" opacity="0.55"/><rect x="863.2" y="358.4" width="3" height="3" fill="#5A5A7A" opacity="0.55"/><rect x="869.8" y="358.4" width="3" height="3" fill="#8A3A2A" opacity="0.55"/><rect x="889.8" y="358.4" width="3" height="3" fill="#E0863E" opacity="0.55"/><rect x="893.1" y="358.4" width="3" height="3" fill="#A8502A" opacity="0.55"/><rect x="899.8" y="358.4" width="3" height="3" fill="#8A6A8A" opacity="0.55"/><rect x="903.1" y="358.4" width="3" height="3" fill="#E8A060" opacity="0.55"/><rect x="909.8" y="358.4" width="3" height="3" fill="#C88A5A" opacity="0.55"/><rect x="913.1" y="358.4" width="3" height="3" fill="#E0863E" opacity="0.55"/><rect x="916.5" y="358.4" width="3" height="3" fill="#E0863E" opacity="0.55"/><rect x="923.1" y="358.4" width="3" height="3" fill="#D2702E" opacity="0.55"/><rect x="926.4" y="358.4" width="3" height="3" fill="#5A5A7A" opacity="0.55"/><rect x="933.1" y="358.4" width="3" height="3" fill="#B05A3A" opacity="0.55"/><rect x="936.4" y="358.4" width="3" height="3" fill="#B05A3A" opacity="0.55"/><rect x="939.8" y="358.4" width="3" height="3" fill="#8A3A2A" opacity="0.55"/><rect x="943.1" y="358.4" width="3" height="3" fill="#A8502A" opacity="0.55"/><rect x="949.8" y="358.4" width="3" height="3" fill="#6A4A6A" opacity="0.55"/><rect x="953.1" y="358.4" width="3" height="3" fill="#8A3A2A" opacity="0.55"/><rect x="963.1" y="358.4" width="3" height="3" fill="#4A5A7A" opacity="0.55"/><rect x="969.7" y="358.4" width="3" height="3" fill="#B05A3A" opacity="0.55"/><rect x="979.7" y="358.4" width="3" height="3" fill="#4A5A7A" opacity="0.55"/><rect x="983.1" y="358.4" width="3" height="3" fill="#A8502A" opacity="0.55"/><rect x="989.7" y="358.4" width="3" height="3" fill="#E8A060" opacity="0.55"/><rect x="836.5" y="361.8" width="3" height="3" fill="#A8502A" opacity="0.55"/><rect x="843.2" y="361.8" width="3" height="3" fill="#6A3A30" opacity="0.55"/><rect x="853.2" y="361.8" width="3" height="3" fill="#4A5A7A" opacity="0.55"/><rect x="866.5" y="361.8" width="3" height="3" fill="#A8502A" opacity="0.55"/><rect x="869.8" y="361.8" width="3" height="3" fill="#5A5A7A" opacity="0.55"/><rect x="876.5" y="361.8" width="3" height="3" fill="#4A5A7A" opacity="0.55"/><rect x="879.8" y="361.8" width="3" height="3" fill="#8A6A8A" opacity="0.55"/><rect x="883.2" y="361.8" width="3" height="3" fill="#4A5A7A" opacity="0.55"/><rect x="889.8" y="361.8" width="3" height="3" fill="#C88A5A" opacity="0.55"/><rect x="893.1" y="361.8" width="3" height="3" fill="#C88A5A" opacity="0.55"/><rect x="899.8" y="361.8" width="3" height="3" fill="#E0863E" opacity="0.55"/><rect x="903.1" y="361.8" width="3" height="3" fill="#C88A5A" opacity="0.55"/><rect x="906.5" y="361.8" width="3" height="3" fill="#D89060" opacity="0.55"/><rect x="909.8" y="361.8" width="3" height="3" fill="#4A5A7A" opacity="0.55"/><rect x="913.1" y="361.8" width="3" height="3" fill="#E8A060" opacity="0.55"/><rect x="916.5" y="361.8" width="3" height="3" fill="#E8A060" opacity="0.55"/><rect x="919.8" y="361.8" width="3" height="3" fill="#D89060" opacity="0.55"/><rect x="923.1" y="361.8" width="3" height="3" fill="#5A5A7A" opacity="0.55"/><rect x="929.8" y="361.8" width="3" height="3" fill="#6A3A30" opacity="0.55"/><rect x="933.1" y="361.8" width="3" height="3" fill="#B05A3A" opacity="0.55"/><rect x="936.4" y="361.8" width="3" height="3" fill="#C88A5A" opacity="0.55"/><rect x="939.8" y="361.8" width="3" height="3" fill="#A8502A" opacity="0.55"/><rect x="946.4" y="361.8" width="3" height="3" fill="#5A5A7A" opacity="0.55"/><rect x="949.8" y="361.8" width="3" height="3" fill="#4A5A7A" opacity="0.55"/><rect x="956.4" y="361.8" width="3" height="3" fill="#D89060" opacity="0.55"/><rect x="963.1" y="361.8" width="3" height="3" fill="#D89060" opacity="0.55"/><rect x="966.4" y="361.8" width="3" height="3" fill="#D2702E" opacity="0.55"/><rect x="969.7" y="361.8" width="3" height="3" fill="#A8502A" opacity="0.55"/><rect x="979.7" y="361.8" width="3" height="3" fill="#E8A060" opacity="0.55"/><rect x="983.1" y="361.8" width="3" height="3" fill="#D89060" opacity="0.55"/><rect x="986.4" y="361.8" width="3" height="3" fill="#D89060" opacity="0.55"/><rect x="989.7" y="361.8" width="3" height="3" fill="#6A3A30" opacity="0.55"/></g>
<rect x="840.6" y="282" width="145" height="67" fill="none" stroke="#EED8C0" stroke-width="0.7" opacity="0.8"/>
<path d="M840.6,328.7 H985.6" stroke="#F0DCC8" stroke-width="0.9" opacity="0.9"/>
<text x="913" y="325" font-size="5.2" fill="#F4E6DA" text-anchor="middle">CLICK TO ADD TITLE</text>
</g>
<linearGradient id="g3a" x1="0" y1="0" x2="0.3" y2="1"><stop offset="0" stop-color="#5F9E78"/><stop offset="0.5" stop-color="#66A482"/><stop offset="1" stop-color="#5C98B6"/></linearGradient>
<linearGradient id="g3b" x1="0" y1="0" x2="0" y2="1"><stop offset="0" stop-color="#3A9CAC"/><stop offset="1" stop-color="#45A8B6"/></linearGradient>
<g clip-path="url(#c3)">
<rect x="833.2" y="379" width="159.7" height="89.7" fill="url(#g3b)"/>
<rect x="833.2" y="379" width="51.9" height="89.7" fill="url(#g3a)"/>
<path d="M843,389.5 H884 M843,411 H884 M843,467 H884 M843.5,389 V467 M883.5,389 V467" stroke="#CDE6D6" stroke-width="0.6" stroke-dasharray="0.8,0.8" opacity="0.8"/>
<text x="882" y="410" font-size="4.2" fill="#E0F0E8" text-anchor="end">Click to add</text>
<text x="881" y="424" font-size="5.5" fill="#F6FBF8" text-anchor="end" font-weight="bold" letter-spacing="1">CLICK TO</text>
<text x="881" y="431" font-size="5.5" fill="#F6FBF8" text-anchor="end" font-weight="bold" letter-spacing="1">ADD TITLE</text>
<g fill="#2E8C9A" opacity="0.6" filter="url(#b0)" transform="translate(0.8,1.2)"><circle cx="891" cy="403" r="5.5"/><circle cx="897" cy="397" r="6.5"/><circle cx="905" cy="396" r="6"/><circle cx="911" cy="402" r="5.5"/><circle cx="903" cy="406" r="7"/><circle cx="893" cy="408" r="4.5"/><circle cx="909" cy="409" r="4.5"/><circle cx="919" cy="405" r="6"/><circle cx="926" cy="399" r="5"/><circle cx="930" cy="393.5" r="4.5"/><circle cx="934" cy="401" r="6"/><circle cx="944" cy="406" r="7"/><circle cx="952" cy="413" r="6.5"/><circle cx="946" cy="421" r="6"/><circle cx="935" cy="420" r="7"/><circle cx="924" cy="414" r="6.5"/><circle cx="915" cy="408" r="4.5"/><circle cx="960" cy="392" r="4.5"/><circle cx="966" cy="390" r="4"/><circle cx="970" cy="394" r="3.5"/><circle cx="964" cy="395.5" r="4"/><circle cx="964" cy="407" r="5.5"/><circle cx="971" cy="401" r="6"/><circle cx="979" cy="401" r="5.5"/><circle cx="986" cy="407" r="5.5"/><circle cx="983" cy="413" r="5"/><circle cx="973" cy="413" r="6.5"/><circle cx="964" cy="412" r="4.5"/><ellipse cx="901" cy="403" rx="12" ry="8"/><ellipse cx="936" cy="410" rx="17" ry="11" transform="rotate(25 936 410)"/><ellipse cx="975" cy="408" rx="13" ry="8"/><ellipse cx="965" cy="393" rx="6" ry="4"/></g>
<g fill="#F2F1F3" filter="url(#b0)"><circle cx="891" cy="403" r="5.5"/><circle cx="897" cy="397" r="6.5"/><circle cx="905" cy="396" r="6"/><circle cx="911" cy="402" r="5.5"/><circle cx="903" cy="406" r="7"/><circle cx="893" cy="408" r="4.5"/><circle cx="909" cy="409" r="4.5"/><circle cx="919" cy="405" r="6"/><circle cx="926" cy="399" r="5"/><circle cx="930" cy="393.5" r="4.5"/><circle cx="934" cy="401" r="6"/><circle cx="944" cy="406" r="7"/><circle cx="952" cy="413" r="6.5"/><circle cx="946" cy="421" r="6"/><circle cx="935" cy="420" r="7"/><circle cx="924" cy="414" r="6.5"/><circle cx="915" cy="408" r="4.5"/><circle cx="960" cy="392" r="4.5"/><circle cx="966" cy="390" r="4"/><circle cx="970" cy="394" r="3.5"/><circle cx="964" cy="395.5" r="4"/><circle cx="964" cy="407" r="5.5"/><circle cx="971" cy="401" r="6"/><circle cx="979" cy="401" r="5.5"/><circle cx="986" cy="407" r="5.5"/><circle cx="983" cy="413" r="5"/><circle cx="973" cy="413" r="6.5"/><circle cx="964" cy="412" r="4.5"/><ellipse cx="901" cy="403" rx="12" ry="8"/><ellipse cx="936" cy="410" rx="17" ry="11" transform="rotate(25 936 410)"/><ellipse cx="975" cy="408" rx="13" ry="8"/><ellipse cx="965" cy="393" rx="6" ry="4"/></g>
</g>
<linearGradient id="g4" x1="0" y1="1" x2="1" y2="0"><stop offset="0" stop-color="#4A8A3A"/><stop offset="0.5" stop-color="#3E8258"/><stop offset="1" stop-color="#2F7A62"/></linearGradient>
<g clip-path="url(#c4)">
<rect x="833.5" y="482.7" width="159.3" height="89" fill="#0A1A30"/>
<rect x="833.5" y="535.4" width="159.3" height="36.3" fill="url(#g4)"/>
<g filter="url(#b1)">
<ellipse cx="915" cy="528" rx="30" ry="28" fill="none" stroke="#8EB0C8" stroke-width="8" opacity="0.55"/>
<path d="M889,514 A30,28 0 0 1 945,530" fill="none" stroke="#E6EEF6" stroke-width="7" opacity="0.75"/>
<path d="M886,540 A30,28 0 0 0 905,556 M935,552 Q940,560 930,567" fill="none" stroke="#A8E0B8" stroke-width="3" opacity="0.5"/>
</g>
<g><circle cx="936.8" cy="499.7" r="1.0" fill="#F0F6FF" opacity="0.87"/><circle cx="949.2" cy="510.2" r="0.4" fill="#F0F6FF" opacity="0.63"/><circle cx="950.3" cy="536.6" r="1.0" fill="#F0F6FF" opacity="0.46"/><circle cx="916.3" cy="497.8" r="0.8" fill="#F0F6FF" opacity="0.69"/><circle cx="883.0" cy="531.2" r="0.6" fill="#F0F6FF" opacity="0.86"/><circle cx="944.0" cy="516.2" r="1.0" fill="#F0F6FF" opacity="0.47"/><circle cx="932.7" cy="504.0" r="0.4" fill="#F0F6FF" opacity="0.84"/><circle cx="889.1" cy="510.3" r="1.1" fill="#F0F6FF" opacity="0.84"/><circle cx="891.4" cy="498.4" r="0.8" fill="#F0F6FF" opacity="0.74"/><circle cx="882.8" cy="506.9" r="0.9" fill="#F0F6FF" opacity="0.88"/><circle cx="947.9" cy="530.2" r="0.7" fill="#F0F6FF" opacity="0.48"/><circle cx="886.7" cy="517.1" r="0.6" fill="#F0F6FF" opacity="0.70"/><circle cx="878.6" cy="532.9" r="0.6" fill="#F0F6FF" opacity="0.55"/><circle cx="949.0" cy="521.2" r="0.6" fill="#F0F6FF" opacity="0.64"/><circle cx="939.5" cy="511.0" r="1.1" fill="#F0F6FF" opacity="0.41"/><circle cx="949.2" cy="511.7" r="0.4" fill="#F0F6FF" opacity="0.79"/><circle cx="902.8" cy="496.7" r="0.4" fill="#F0F6FF" opacity="0.42"/><circle cx="880.8" cy="509.6" r="0.5" fill="#F0F6FF" opacity="0.78"/><circle cx="953.6" cy="535.5" r="0.6" fill="#F0F6FF" opacity="0.58"/><circle cx="924.3" cy="494.0" r="0.5" fill="#F0F6FF" opacity="0.77"/><circle cx="951.9" cy="517.6" r="0.4" fill="#F0F6FF" opacity="0.87"/><circle cx="882.2" cy="522.2" r="0.8" fill="#F0F6FF" opacity="0.86"/><circle cx="898.1" cy="495.1" r="0.8" fill="#F0F6FF" opacity="0.56"/><circle cx="898.8" cy="502.6" r="0.5" fill="#F0F6FF" opacity="0.47"/><circle cx="945.6" cy="504.0" r="0.5" fill="#F0F6FF" opacity="0.42"/><circle cx="947.2" cy="541.4" r="0.7" fill="#F0F6FF" opacity="0.52"/><circle cx="933.7" cy="497.0" r="0.7" fill="#F0F6FF" opacity="0.61"/><circle cx="875.9" cy="526.1" r="0.4" fill="#F0F6FF" opacity="0.65"/><circle cx="946.0" cy="524.0" r="0.9" fill="#F0F6FF" opacity="0.87"/><circle cx="937.9" cy="499.9" r="0.5" fill="#F0F6FF" opacity="0.62"/><circle cx="879.7" cy="513.9" r="0.6" fill="#F0F6FF" opacity="0.63"/><circle cx="949.4" cy="544.2" r="1.1" fill="#F0F6FF" opacity="0.63"/><circle cx="919.2" cy="493.5" r="0.7" fill="#F0F6FF" opacity="0.55"/><circle cx="908.6" cy="499.4" r="0.7" fill="#F0F6FF" opacity="0.89"/><circle cx="949.4" cy="538.6" r="0.7" fill="#F0F6FF" opacity="0.57"/><circle cx="882.8" cy="522.6" r="0.9" fill="#F0F6FF" opacity="0.83"/><circle cx="901.5" cy="495.1" r="0.9" fill="#F0F6FF" opacity="0.75"/><circle cx="941.3" cy="503.0" r="0.7" fill="#F0F6FF" opacity="0.75"/><circle cx="893.4" cy="502.6" r="0.9" fill="#F0F6FF" opacity="0.75"/><circle cx="892.1" cy="498.1" r="0.9" fill="#F0F6FF" opacity="0.69"/><circle cx="879.8" cy="531.7" r="0.6" fill="#F0F6FF" opacity="0.74"/><circle cx="915.7" cy="492.5" r="0.9" fill="#F0F6FF" opacity="0.80"/><circle cx="900.3" cy="497.0" r="0.9" fill="#F0F6FF" opacity="0.81"/><circle cx="899.7" cy="495.2" r="1.0" fill="#F0F6FF" opacity="0.74"/><circle cx="951.7" cy="541.7" r="0.8" fill="#F0F6FF" opacity="0.66"/><circle cx="880.8" cy="511.9" r="1.1" fill="#F0F6FF" opacity="0.64"/><circle cx="943.6" cy="505.9" r="0.9" fill="#F0F6FF" opacity="0.49"/><circle cx="948.6" cy="516.4" r="0.9" fill="#F0F6FF" opacity="0.61"/><circle cx="937.0" cy="499.5" r="0.8" fill="#F0F6FF" opacity="0.76"/><circle cx="883.4" cy="529.6" r="0.7" fill="#F0F6FF" opacity="0.73"/><circle cx="886.1" cy="506.7" r="0.8" fill="#F0F6FF" opacity="0.42"/><circle cx="916.6" cy="498.0" r="0.4" fill="#F0F6FF" opacity="0.47"/><circle cx="898.9" cy="502.5" r="0.5" fill="#F0F6FF" opacity="0.42"/><circle cx="915.9" cy="496.6" r="0.8" fill="#F0F6FF" opacity="0.70"/><circle cx="886.2" cy="503.5" r="0.4" fill="#F0F6FF" opacity="0.60"/><circle cx="893.6" cy="503.3" r="0.5" fill="#F0F6FF" opacity="0.82"/><circle cx="905.5" cy="501.2" r="0.8" fill="#F0F6FF" opacity="0.45"/><circle cx="925.7" cy="498.6" r="0.8" fill="#F0F6FF" opacity="0.88"/><circle cx="948.4" cy="521.3" r="1.0" fill="#F0F6FF" opacity="0.72"/><circle cx="904.7" cy="500.4" r="0.8" fill="#F0F6FF" opacity="0.68"/><circle cx="952.8" cy="539.3" r="0.8" fill="#F0F6FF" opacity="0.58"/><circle cx="944.9" cy="529.9" r="0.5" fill="#F0F6FF" opacity="0.68"/><circle cx="932.5" cy="503.7" r="0.8" fill="#F0F6FF" opacity="0.85"/><circle cx="904.5" cy="497.6" r="0.6" fill="#F0F6FF" opacity="0.55"/><circle cx="946.5" cy="539.3" r="1.1" fill="#F0F6FF" opacity="0.86"/><circle cx="931.1" cy="501.7" r="1.1" fill="#F0F6FF" opacity="0.65"/><circle cx="909.7" cy="497.5" r="1.1" fill="#F0F6FF" opacity="0.65"/><circle cx="894.0" cy="502.2" r="0.5" fill="#F0F6FF" opacity="0.71"/><circle cx="913.2" cy="497.4" r="0.9" fill="#F0F6FF" opacity="0.81"/><circle cx="879.9" cy="531.5" r="0.6" fill="#F0F6FF" opacity="0.87"/><circle cx="945.5" cy="517.6" r="0.6" fill="#F0F6FF" opacity="0.48"/><circle cx="944.9" cy="540.7" r="0.8" fill="#F0F6FF" opacity="0.64"/><circle cx="938.3" cy="502.4" r="0.9" fill="#F0F6FF" opacity="0.46"/><circle cx="945.0" cy="515.1" r="0.8" fill="#F0F6FF" opacity="0.57"/><circle cx="894.8" cy="501.1" r="0.7" fill="#F0F6FF" opacity="0.58"/><circle cx="946.7" cy="512.3" r="0.4" fill="#F0F6FF" opacity="0.53"/><circle cx="914.6" cy="491.6" r="1.0" fill="#F0F6FF" opacity="0.67"/><circle cx="877.4" cy="531.6" r="0.7" fill="#F0F6FF" opacity="0.69"/><circle cx="944.4" cy="508.1" r="0.7" fill="#F0F6FF" opacity="0.86"/><circle cx="905.8" cy="497.6" r="1.0" fill="#F0F6FF" opacity="0.50"/><circle cx="893.0" cy="498.8" r="0.4" fill="#F0F6FF" opacity="0.82"/><circle cx="941.7" cy="507.9" r="0.6" fill="#F0F6FF" opacity="0.79"/><circle cx="946.1" cy="531.9" r="0.7" fill="#F0F6FF" opacity="0.67"/><circle cx="919.9" cy="497.4" r="0.5" fill="#F0F6FF" opacity="0.69"/><circle cx="944.8" cy="521.3" r="0.6" fill="#F0F6FF" opacity="0.81"/><circle cx="949.8" cy="517.5" r="0.4" fill="#F0F6FF" opacity="0.76"/><circle cx="952.0" cy="542.2" r="0.9" fill="#F0F6FF" opacity="0.42"/><circle cx="946.9" cy="524.3" r="0.9" fill="#F0F6FF" opacity="0.88"/><circle cx="940.6" cy="511.2" r="0.6" fill="#F0F6FF" opacity="0.86"/><circle cx="881.8" cy="514.7" r="0.7" fill="#F0F6FF" opacity="0.48"/></g>
<rect x="850.5" y="538.6" width="126" height="23.6" fill="none" stroke="#D8E8D0" stroke-width="0.6" stroke-dasharray="0.8,0.8"/>
<path d="M850.5,553 H976.5" stroke="#D8E8D0" stroke-width="0.6" stroke-dasharray="0.8,0.8"/>
<text x="851.5" y="549.3" font-size="7.8" fill="#F2F6F0" font-weight="bold">CLICK TO ADD TITLE</text>
<text x="852" y="558.5" font-size="3" fill="#E0E8E0">Click to add subtitle</text>
<circle cx="840" cy="541.5" r="0.8" fill="#9AD09A"/><circle cx="844.5" cy="543" r="0.8" fill="#9AD09A"/><circle cx="840" cy="547.5" r="0.8" fill="#9AD09A"/>
</g>
<linearGradient id="g5" x1="0" y1="0" x2="1" y2="0"><stop offset="0" stop-color="#BABABA"/><stop offset="0.3" stop-color="#CACACA"/><stop offset="0.55" stop-color="#E6E6E6"/><stop offset="1" stop-color="#D6D6D6"/></linearGradient>
<pattern id="p5" x="833" y="585" width="9" height="7" patternUnits="userSpaceOnUse"><rect x="1" y="1" width="3" height="2" fill="#707070" opacity="0.25"/><rect x="5" y="4" width="2" height="2" fill="#FFFFFF" opacity="0.25"/></pattern>
<g clip-path="url(#c5)">
<rect x="833.5" y="585.7" width="159.3" height="35.6" fill="url(#g5)"/>
<g filter="url(#b0)"><rect x="869.5" y="601.5" width="3.3" height="7.6" fill="#808080" opacity="0.42"/><rect x="840.7" y="597.9" width="2.5" height="11.5" fill="#707070" opacity="0.52"/><rect x="868.7" y="584.3" width="2.3" height="12.7" fill="#707070" opacity="0.42"/><rect x="892.5" y="594.1" width="2.0" height="10.9" fill="#808080" opacity="0.33"/><rect x="897.5" y="613.6" width="1.0" height="2.4" fill="#808080" opacity="0.32"/><rect x="893.2" y="608.4" width="1.7" height="9.1" fill="#808080" opacity="0.33"/><rect x="879.6" y="603.1" width="2.1" height="9.9" fill="#989898" opacity="0.38"/><rect x="903.5" y="593.3" width="2.3" height="13.2" fill="#707070" opacity="0.29"/><rect x="914.0" y="594.0" width="1.4" height="5.5" fill="#707070" opacity="0.25"/><rect x="886.9" y="586.7" width="1.1" height="5.5" fill="#707070" opacity="0.35"/><rect x="972.4" y="613.1" width="0.8" height="4.5" fill="#707070" opacity="0.04"/><rect x="872.0" y="618.6" width="1.9" height="2.9" fill="#808080" opacity="0.41"/><rect x="929.1" y="592.1" width="1.0" height="6.0" fill="#989898" opacity="0.20"/><rect x="924.6" y="588.2" width="1.5" height="3.2" fill="#707070" opacity="0.22"/><rect x="871.3" y="600.6" width="2.6" height="4.3" fill="#808080" opacity="0.41"/><rect x="979.5" y="609.3" width="1.9" height="6.6" fill="#989898" opacity="0.01"/><rect x="865.1" y="586.3" width="1.5" height="13.7" fill="#8A8A8A" opacity="0.43"/><rect x="982.9" y="579.4" width="1.3" height="14.0" fill="#707070" opacity="0.00"/><rect x="834.0" y="589.8" width="2.0" height="2.1" fill="#8A8A8A" opacity="0.55"/><rect x="940.8" y="597.0" width="1.0" height="4.5" fill="#808080" opacity="0.16"/><rect x="833.6" y="596.8" width="2.5" height="3.5" fill="#989898" opacity="0.55"/><rect x="941.3" y="585.7" width="1.8" height="9.5" fill="#8A8A8A" opacity="0.15"/><rect x="959.7" y="612.2" width="1.5" height="4.3" fill="#808080" opacity="0.09"/><rect x="909.8" y="597.8" width="2.1" height="2.9" fill="#707070" opacity="0.27"/><rect x="836.0" y="584.6" width="3.4" height="4.9" fill="#989898" opacity="0.54"/><rect x="846.5" y="611.8" width="2.4" height="5.5" fill="#808080" opacity="0.50"/><rect x="964.9" y="616.0" width="1.1" height="7.8" fill="#707070" opacity="0.07"/><rect x="848.7" y="616.7" width="1.4" height="2.2" fill="#8A8A8A" opacity="0.49"/><rect x="863.8" y="591.7" width="0.9" height="5.4" fill="#808080" opacity="0.44"/><rect x="835.6" y="587.6" width="2.0" height="6.0" fill="#808080" opacity="0.54"/><rect x="891.5" y="614.9" width="2.1" height="6.3" fill="#8A8A8A" opacity="0.34"/><rect x="973.6" y="582.6" width="2.5" height="7.8" fill="#8A8A8A" opacity="0.04"/><rect x="852.7" y="616.4" width="1.0" height="8.6" fill="#707070" opacity="0.48"/><rect x="957.6" y="605.7" width="2.7" height="11.5" fill="#8A8A8A" opacity="0.09"/><rect x="856.4" y="603.5" width="3.2" height="12.5" fill="#989898" opacity="0.47"/><rect x="968.8" y="585.7" width="2.1" height="2.2" fill="#989898" opacity="0.05"/><rect x="859.7" y="584.6" width="1.0" height="3.1" fill="#707070" opacity="0.45"/><rect x="981.7" y="613.2" width="2.8" height="6.7" fill="#989898" opacity="0.01"/><rect x="867.8" y="609.5" width="1.0" height="11.0" fill="#707070" opacity="0.42"/><rect x="851.7" y="582.0" width="0.9" height="13.5" fill="#707070" opacity="0.48"/><rect x="876.2" y="604.7" width="3.3" height="5.1" fill="#707070" opacity="0.39"/><rect x="858.3" y="586.6" width="2.5" height="8.2" fill="#8A8A8A" opacity="0.46"/><rect x="904.5" y="598.2" width="3.2" height="5.9" fill="#8A8A8A" opacity="0.29"/><rect x="841.7" y="594.3" width="3.0" height="13.0" fill="#808080" opacity="0.52"/><rect x="860.3" y="604.3" width="1.7" height="3.6" fill="#989898" opacity="0.45"/><rect x="856.3" y="615.7" width="0.9" height="2.8" fill="#8A8A8A" opacity="0.47"/><rect x="938.9" y="583.1" width="2.1" height="13.1" fill="#989898" opacity="0.16"/><rect x="860.1" y="598.6" width="2.6" height="10.6" fill="#989898" opacity="0.45"/><rect x="852.8" y="610.1" width="1.6" height="9.3" fill="#8A8A8A" opacity="0.48"/><rect x="888.1" y="595.4" width="2.9" height="2.2" fill="#808080" opacity="0.35"/><rect x="863.0" y="589.7" width="2.9" height="5.2" fill="#808080" opacity="0.44"/><rect x="933.2" y="618.5" width="1.1" height="3.3" fill="#8A8A8A" opacity="0.18"/><rect x="972.5" y="605.8" width="1.3" height="7.7" fill="#808080" opacity="0.04"/><rect x="915.3" y="610.9" width="2.2" height="2.4" fill="#808080" opacity="0.25"/><rect x="847.9" y="593.7" width="2.7" height="8.2" fill="#808080" opacity="0.50"/><rect x="861.5" y="611.9" width="3.2" height="3.0" fill="#989898" opacity="0.45"/><rect x="837.3" y="595.1" width="2.5" height="12.9" fill="#989898" opacity="0.54"/><rect x="884.6" y="602.6" width="2.2" height="11.8" fill="#8A8A8A" opacity="0.36"/><rect x="871.1" y="603.2" width="1.4" height="10.7" fill="#707070" opacity="0.41"/><rect x="842.8" y="610.3" width="3.4" height="13.7" fill="#8A8A8A" opacity="0.52"/><rect x="846.9" y="606.8" width="0.8" height="8.1" fill="#707070" opacity="0.50"/><rect x="867.8" y="601.0" width="2.9" height="7.8" fill="#707070" opacity="0.42"/><rect x="843.2" y="614.9" width="2.0" height="2.4" fill="#8A8A8A" opacity="0.51"/><rect x="909.7" y="610.8" width="2.1" height="14.0" fill="#989898" opacity="0.27"/><rect x="969.2" y="601.4" width="3.4" height="3.0" fill="#808080" opacity="0.05"/><rect x="867.6" y="600.9" width="3.0" height="8.7" fill="#808080" opacity="0.42"/><rect x="880.2" y="612.4" width="2.3" height="5.7" fill="#989898" opacity="0.38"/><rect x="971.5" y="613.3" width="2.4" height="5.7" fill="#808080" opacity="0.04"/><rect x="975.1" y="601.8" width="2.3" height="4.4" fill="#707070" opacity="0.03"/><rect x="877.1" y="600.1" width="0.9" height="13.6" fill="#989898" opacity="0.39"/><rect x="883.6" y="618.8" width="1.1" height="3.1" fill="#808080" opacity="0.37"/><rect x="834.6" y="597.8" width="1.9" height="13.5" fill="#989898" opacity="0.55"/><rect x="847.6" y="598.7" width="1.1" height="7.2" fill="#989898" opacity="0.50"/><rect x="880.5" y="588.3" width="1.9" height="2.4" fill="#8A8A8A" opacity="0.38"/><rect x="837.3" y="610.8" width="0.9" height="4.3" fill="#808080" opacity="0.54"/><rect x="833.6" y="593.2" width="2.8" height="4.9" fill="#989898" opacity="0.55"/><rect x="836.1" y="607.2" width="1.1" height="8.1" fill="#8A8A8A" opacity="0.54"/><rect x="916.1" y="609.1" width="3.2" height="2.3" fill="#989898" opacity="0.25"/><rect x="939.6" y="601.1" width="2.3" height="12.4" fill="#808080" opacity="0.16"/><rect x="881.3" y="609.4" width="2.5" height="12.3" fill="#808080" opacity="0.37"/><rect x="961.3" y="605.6" width="1.7" height="4.2" fill="#8A8A8A" opacity="0.08"/><rect x="955.3" y="590.3" width="2.9" height="4.3" fill="#707070" opacity="0.10"/><rect x="837.5" y="591.5" width="2.8" height="5.1" fill="#707070" opacity="0.54"/><rect x="867.0" y="613.4" width="2.3" height="10.5" fill="#808080" opacity="0.43"/><rect x="862.7" y="607.5" width="0.8" height="4.4" fill="#8A8A8A" opacity="0.44"/><rect x="960.4" y="615.6" width="1.1" height="8.1" fill="#8A8A8A" opacity="0.08"/><rect x="877.0" y="608.3" width="1.3" height="2.8" fill="#707070" opacity="0.39"/><rect x="833.7" y="605.9" width="2.5" height="12.9" fill="#989898" opacity="0.55"/><rect x="838.2" y="586.1" width="1.4" height="12.1" fill="#8A8A8A" opacity="0.53"/><rect x="964.3" y="582.3" width="1.0" height="13.4" fill="#989898" opacity="0.07"/><rect x="835.0" y="585.5" width="1.9" height="7.1" fill="#8A8A8A" opacity="0.54"/><rect x="866.3" y="601.5" width="0.8" height="10.4" fill="#808080" opacity="0.43"/><rect x="840.4" y="598.2" width="2.8" height="6.9" fill="#808080" opacity="0.52"/><rect x="894.2" y="586.1" width="2.9" height="5.9" fill="#707070" opacity="0.33"/><rect x="934.3" y="605.6" width="3.1" height="9.6" fill="#989898" opacity="0.18"/><rect x="888.0" y="589.3" width="2.4" height="6.1" fill="#8A8A8A" opacity="0.35"/><rect x="848.6" y="587.8" width="2.8" height="3.9" fill="#989898" opacity="0.49"/><rect x="837.5" y="594.0" width="2.3" height="6.4" fill="#989898" opacity="0.54"/><rect x="926.2" y="598.5" width="2.8" height="2.8" fill="#8A8A8A" opacity="0.21"/><rect x="850.8" y="582.3" width="3.2" height="13.9" fill="#707070" opacity="0.49"/><rect x="844.3" y="615.7" width="2.6" height="6.1" fill="#989898" opacity="0.51"/><rect x="888.0" y="597.4" width="1.9" height="14.0" fill="#808080" opacity="0.35"/><rect x="912.7" y="611.2" width="3.4" height="2.3" fill="#707070" opacity="0.26"/><rect x="920.5" y="593.4" width="1.9" height="2.6" fill="#808080" opacity="0.23"/><rect x="902.2" y="583.4" width="1.5" height="5.3" fill="#8A8A8A" opacity="0.30"/><rect x="884.6" y="599.1" width="3.4" height="8.8" fill="#707070" opacity="0.36"/><rect x="900.3" y="609.4" width="1.0" height="9.2" fill="#707070" opacity="0.31"/><rect x="860.6" y="611.7" width="1.8" height="13.6" fill="#989898" opacity="0.45"/><rect x="883.3" y="602.6" width="2.0" height="7.9" fill="#8A8A8A" opacity="0.37"/><rect x="880.8" y="603.9" width="1.8" height="5.4" fill="#8A8A8A" opacity="0.38"/><rect x="886.4" y="592.8" width="2.7" height="5.6" fill="#707070" opacity="0.36"/><rect x="927.8" y="602.8" width="2.5" height="6.9" fill="#989898" opacity="0.20"/><rect x="834.3" y="592.2" width="1.9" height="9.0" fill="#8A8A8A" opacity="0.55"/><rect x="834.9" y="613.5" width="2.0" height="7.7" fill="#808080" opacity="0.54"/><rect x="834.1" y="582.7" width="3.0" height="12.9" fill="#808080" opacity="0.55"/><rect x="977.8" y="612.6" width="2.4" height="3.4" fill="#989898" opacity="0.02"/><rect x="869.9" y="588.7" width="0.9" height="8.3" fill="#707070" opacity="0.42"/><rect x="857.7" y="586.0" width="1.9" height="9.2" fill="#989898" opacity="0.46"/><rect x="857.8" y="609.9" width="3.0" height="3.6" fill="#8A8A8A" opacity="0.46"/><rect x="919.5" y="587.7" width="1.1" height="12.7" fill="#8A8A8A" opacity="0.23"/><rect x="848.2" y="601.8" width="2.8" height="10.4" fill="#808080" opacity="0.50"/><rect x="899.4" y="609.6" width="1.3" height="5.0" fill="#808080" opacity="0.31"/><rect x="952.4" y="584.5" width="1.0" height="5.3" fill="#989898" opacity="0.11"/><rect x="833.7" y="584.4" width="1.4" height="5.3" fill="#707070" opacity="0.55"/><rect x="960.8" y="584.4" width="1.4" height="13.8" fill="#989898" opacity="0.08"/><rect x="873.3" y="587.6" width="1.7" height="10.9" fill="#707070" opacity="0.40"/><rect x="934.4" y="595.3" width="3.0" height="12.1" fill="#808080" opacity="0.18"/><rect x="868.3" y="610.0" width="1.9" height="3.8" fill="#808080" opacity="0.42"/><rect x="903.3" y="616.0" width="1.7" height="8.6" fill="#808080" opacity="0.29"/><rect x="866.0" y="592.4" width="1.1" height="12.5" fill="#707070" opacity="0.43"/><rect x="883.6" y="594.9" width="2.3" height="11.8" fill="#989898" opacity="0.37"/><rect x="850.6" y="610.6" width="1.0" height="4.6" fill="#707070" opacity="0.49"/><rect x="911.4" y="600.0" width="2.9" height="5.9" fill="#808080" opacity="0.26"/><rect x="843.2" y="602.3" width="1.7" height="12.9" fill="#8A8A8A" opacity="0.51"/><rect x="914.3" y="599.0" width="3.3" height="13.3" fill="#8A8A8A" opacity="0.25"/><rect x="867.4" y="610.9" width="1.6" height="5.8" fill="#989898" opacity="0.43"/><rect x="974.9" y="609.7" width="2.2" height="3.0" fill="#8A8A8A" opacity="0.03"/><rect x="833.7" y="603.6" width="2.4" height="11.6" fill="#8A8A8A" opacity="0.55"/><rect x="933.2" y="600.2" width="3.1" height="8.8" fill="#808080" opacity="0.18"/><rect x="835.5" y="595.7" width="3.1" height="11.7" fill="#808080" opacity="0.54"/><rect x="926.7" y="604.7" width="7.0" height="5.9" fill="#F4F4F4" opacity="0.5"/><rect x="941.6" y="613.9" width="3.4" height="4.2" fill="#F4F4F4" opacity="0.5"/><rect x="956.7" y="588.6" width="3.6" height="4.9" fill="#F4F4F4" opacity="0.5"/><rect x="968.9" y="588.7" width="7.4" height="2.6" fill="#F4F4F4" opacity="0.5"/><rect x="952.0" y="608.4" width="4.7" height="2.9" fill="#F4F4F4" opacity="0.5"/><rect x="954.2" y="604.0" width="8.4" height="3.6" fill="#F4F4F4" opacity="0.5"/><rect x="907.2" y="619.6" width="7.7" height="4.0" fill="#F4F4F4" opacity="0.5"/><rect x="929.1" y="610.9" width="8.0" height="5.7" fill="#F4F4F4" opacity="0.5"/><rect x="915.2" y="614.6" width="7.7" height="5.4" fill="#F4F4F4" opacity="0.5"/><rect x="958.6" y="614.9" width="9.2" height="5.8" fill="#F4F4F4" opacity="0.5"/><rect x="940.4" y="604.0" width="8.0" height="5.2" fill="#F4F4F4" opacity="0.5"/><rect x="916.4" y="600.4" width="4.0" height="5.0" fill="#F4F4F4" opacity="0.5"/><rect x="979.0" y="598.8" width="4.2" height="2.8" fill="#F4F4F4" opacity="0.5"/><rect x="916.7" y="595.9" width="9.8" height="2.2" fill="#F4F4F4" opacity="0.5"/><rect x="903.9" y="589.7" width="7.5" height="5.1" fill="#F4F4F4" opacity="0.5"/><rect x="889.7" y="587.9" width="6.2" height="4.3" fill="#F4F4F4" opacity="0.5"/><rect x="970.0" y="587.0" width="3.8" height="2.7" fill="#F4F4F4" opacity="0.5"/><rect x="893.9" y="593.9" width="8.0" height="4.4" fill="#F4F4F4" opacity="0.5"/><rect x="894.6" y="592.2" width="5.0" height="2.7" fill="#F4F4F4" opacity="0.5"/><rect x="953.3" y="596.6" width="6.8" height="5.3" fill="#F4F4F4" opacity="0.5"/><rect x="922.7" y="594.8" width="9.2" height="5.7" fill="#F4F4F4" opacity="0.5"/><rect x="907.6" y="604.9" width="9.7" height="3.9" fill="#F4F4F4" opacity="0.5"/><rect x="894.3" y="587.4" width="9.6" height="5.2" fill="#F4F4F4" opacity="0.5"/><rect x="912.3" y="604.2" width="6.6" height="3.1" fill="#F4F4F4" opacity="0.5"/><rect x="978.9" y="608.7" width="4.7" height="2.0" fill="#F4F4F4" opacity="0.5"/></g>
<path d="M878,607 H950 V621" fill="none" stroke="#9A9A9A" stroke-width="0.5" stroke-dasharray="0.8,0.8"/>
<ellipse cx="982" cy="582" rx="21" ry="14" fill="#5F84CC"/>
</g>
<rect x="0" y="632" width="1024" height="17" fill="#F3F3F3"/>
<text x="5.3" y="643.2" font-size="8.0" fill="#444" stroke="#444" stroke-width="0.18" text-anchor="start" >Slide 1 of 1</text>
<text x="82.6" y="643.2" font-size="8.0" fill="#444" stroke="#444" stroke-width="0.18" text-anchor="start" >English (United States)</text>
<text x="661.4" y="643.2" font-size="8.0" fill="#444" stroke="#444" stroke-width="0.18" text-anchor="start" >Notes</text>
<text x="708.8" y="643.2" font-size="8.0" fill="#444" stroke="#444" stroke-width="0.18" text-anchor="start" >Comments</text>
<text x="977" y="643.2" font-size="8.0" fill="#444" stroke="#444" stroke-width="0.18" text-anchor="start" >70%</text>
<radialGradient id="spark" cx="0.5" cy="0.5" r="0.5"><stop offset="0" stop-color="#F6D46E" stop-opacity="1"/><stop offset="1" stop-color="#F6D46E" stop-opacity="0"/></radialGradient>
<rect x="11.5" y="53.3" width="20" height="16" fill="#fff" stroke="#939393" stroke-width="1"/>
<rect x="14.5" y="56.4" width="13.5" height="3.6" fill="#ABABAB"/>
<path d="M14.5,63.4 H28 M14.5,65.8 H28" stroke="#9E9E9E" stroke-width="0.8"/>
<circle cx="12.5" cy="54" r="4.5" fill="url(#spark)"/>
<rect x="52.9" y="53.4" width="19" height="16.4" fill="#fff" stroke="#6E6E6E" stroke-width="1.2"/>
<rect x="52.9" y="53.4" width="19" height="2.8" fill="#6E6E6E"/>
<path d="M59.3,56 V69.8 M65.6,56 V69.8 M52.9,59.3 H71.9 M52.9,62.6 H71.9 M52.9,66 H71.9" stroke="#6E6E6E" stroke-width="1"/>
<rect x="95.9" y="52.3" width="18.5" height="18.3" fill="#fff" stroke="#9A9A9A" stroke-width="1"/>
<circle cx="110" cy="56.8" r="2" fill="#EDC88A"/>
<path d="M96.6,70 L103.6,61.5 L108.2,66.5 L109,63.5 L113.8,69 L113.8,70 Z" fill="#41719C"/>
<path d="M104.5,62.5 L112,70" stroke="#fff" stroke-width="0.9"/>
<path d="M136.7,63 V52.8 H151.3 V64" fill="#fff" stroke="#D2D2D2" stroke-width="1"/>
<rect x="136.9" y="53" width="14.2" height="11" fill="#fff"/>
<rect x="134" y="64.4" width="12" height="6.7" rx="1" fill="#6B6B6B"/>
<rect x="137" y="63.1" width="5" height="2" fill="#6B6B6B"/>
<circle cx="140" cy="67.8" r="2" fill="none" stroke="#B0B0B0" stroke-width="1"/>
<path d="M148.2,68.2 H154.2 M151.2,65.2 V71.2" stroke="#5F6E85" stroke-width="1.3"/>
<rect x="176" y="57" width="19" height="13.8" fill="#C9C9C9"/>
<rect x="173.8" y="52.2" width="17.5" height="12.8" fill="#EEF2F0" stroke="#7A8790" stroke-width="1.1"/>
<rect x="173.8" y="52.2" width="17.5" height="3.6" fill="#5D6F7B"/>
<path d="M174.3,60.5 Q178,57 181,58.5 Q185,56.5 190.8,58.2 V62 H174.3 Z" fill="#A8C0B0"/>
<path d="M174.3,62 H190.8 V64.6 H174.3 Z" fill="#8A9E92"/>
<path d="M186.5,64.5 L191.5,59.5" stroke="#fff" stroke-width="1.2"/>
<rect x="218" y="53.6" width="11.5" height="12.3" fill="#fff" stroke="#8C8C8C" stroke-width="1.1"/>
<circle cx="233" cy="57.5" r="5.2" fill="#fff" stroke="#8C8C8C" stroke-width="1.1"/>
<path d="M228,60.3 L233.8,66 L228,71.2 L222.2,66 Z" fill="#fff" stroke="#8C8C8C" stroke-width="1.1"/>
<circle cx="260.8" cy="54.6" r="4.3" fill="#41719C"/><path d="M264,52.4 L268.2,55 L264,57 Z" fill="#41719C"/>
<path d="M248.2,56.6 Q253,56.8 257,58.8 Q260,56.8 264.2,57.2 Q263,62.8 256.5,64.2 Q250,64.3 248.2,56.6 Z" fill="#41719C"/>
<path d="M257.2,68.8 Q265.5,69 266.6,60 Q259,61 257.2,68.8 Z" fill="#fff" stroke="#858585" stroke-width="1"/><path d="M253.5,71.3 Q256,66.5 261,64.6" fill="none" stroke="#858585" stroke-width="1"/>
<path d="M291,51.5 L299.5,56.2 V66 L291,70.7 L282.5,66 V56.2 Z" fill="#F7FBFD" stroke="#5A6B78" stroke-width="1.1"/>
<path d="M282.5,56.2 L291,61 L299.5,56.2 M291,61 V70.7" fill="none" stroke="#5A6B78" stroke-width="1.1"/>
<path d="M318.7,53.5 L332,53.5 L336.3,59.2 L332,65 L318.7,65 L322.5,59.2 Z" fill="#7CA28F"/>
<rect x="325.5" y="59" width="14" height="10.5" fill="#fff" stroke="#8C8C8C" stroke-width="1"/>
<path d="M328,62.2 H337 M328,64.4 H337 M328,66.6 H337" stroke="#A6A6A6" stroke-width="0.8"/>
<rect x="353.3" y="58.3" width="4.9" height="12.2" fill="#41719C"/>
<rect x="359.2" y="52.9" width="4.9" height="17.6" fill="#EBCB86"/>
<rect x="365" y="56.3" width="4.6" height="14.2" fill="#6F6F6F"/>
<path d="M390.6,57.8 H397 V67.3 H390.6 Z M393.8,57.8 V67.3 M390.6,62.5 H400.4 V67.3 H397" fill="#FBF3EE" stroke="#C99273" stroke-width="1"/>
<path d="M399.4,55.2 V60.6 M396.8,57.9 H401.9" stroke="#C99273" stroke-width="1"/>
<path d="M394.2,80 L398.5,78.9 L401,80.5 V85.8 L396.5,87.5 L394.2,86 Z" fill="#1F5F8F"/>
<circle cx="392.6" cy="86" r="2.1" fill="#1F5F8F"/>
<rect x="478.5" y="54.4" width="21" height="13.6" fill="#fff" stroke="#808080" stroke-width="1"/>
<rect x="486.5" y="56.5" width="11" height="9.5" fill="#E6F3F3" stroke="#808080" stroke-width="1"/>
<path d="M479,58.5 H486.5 M479,64 H486.5" stroke="#808080" stroke-width="0.9"/><rect x="480" y="59.5" width="4" height="3.5" fill="#C8C8C8"/>
<circle cx="516.5" cy="60.3" r="7.8" fill="#F7F7F7" stroke="#C4C4C4" stroke-width="0.9"/>
<path d="M508.7,60.3 H524.3 M510,56 H523 M510,64.5 H523 M516.5,52.5 V68 M516.5,52.5 Q511,60 516.5,68 M516.5,52.5 Q522,60 516.5,68" fill="none" stroke="#C4C4C4" stroke-width="0.8"/>
<rect x="516.5" y="66.3" width="7" height="4.6" rx="2.3" fill="#F3F3F3" stroke="#A8A8A8" stroke-width="1.1"/><rect x="522" y="66.3" width="7" height="4.6" rx="2.3" fill="none" stroke="#A8A8A8" stroke-width="1.1"/>
<rect x="539" y="53.6" width="18.4" height="16.6" fill="none" stroke="#B8B8B8" stroke-width="0.9" stroke-dasharray="1.2,1.2"/>
<path d="M547.6,57.4 L549,61.2 L553,61.3 L549.8,63.7 L551,67.6 L547.6,65.3 L544.2,67.6 L545.4,63.7 L542.2,61.3 L546.2,61.2 Z" fill="#9C9C9C"/>
<path d="M585.8,53.6 H604.6 V65.6 H593.5 L590,69.8 L590.3,65.6 H585.8 Z" fill="#fff" stroke="#8A8A8A" stroke-width="1"/>
<path d="M587.8,50.8 V58.2 M584.1,54.5 H591.5" stroke="#4A9878" stroke-width="2.4"/>
<rect x="633.5" y="52.8" width="18.6" height="17.4" fill="#fff" stroke="#8E8E8E" stroke-width="1"/>
<text x="635.8" y="61.5" font-size="8.5" fill="#5C6E80" font-family="Liberation Sans">A</text>
<path d="M642.5,56.5 H650 M642.5,58.6 H650 M642.5,60.7 H650 M635,65.8 H650.5" stroke="#B4B4B4" stroke-width="0.8"/>
<path d="M669.9,52.8 H680.8 L684,56 V70.8 H669.9 Z" fill="#fff" stroke="#8E8E8E" stroke-width="1"/>
<path d="M680.8,52.8 V56 H684" fill="none" stroke="#8E8E8E" stroke-width="0.8"/>
<rect x="671.6" y="54.3" width="7" height="3.4" fill="#E3D69F"/><rect x="671.6" y="65.2" width="10" height="3.4" fill="#E3D69F"/>
<path d="M705.3,68.6 Q709.5,62 716.8,53.6 Q716.2,62 716.8,70" fill="none" stroke="#4A6986" stroke-width="2.4" stroke-linecap="round" stroke-linejoin="round"/>
<path d="M709.2,63.8 H716" stroke="#4A6986" stroke-width="2"/>
<rect x="732.9" y="51.5" width="9" height="7.6" fill="#fff" stroke="#7A7A7A" stroke-width="1"/><rect x="732.9" y="51.5" width="9" height="1.8" fill="#7A7A7A"/>
<path d="M734.5,55 H737 M734.5,57 H737" stroke="#A0A0A0" stroke-width="0.7"/>
<circle cx="740.6" cy="59.4" r="2.9" fill="#fff" stroke="#7A7A7A" stroke-width="0.9"/><path d="M740.6,57.8 V59.5 H742" fill="none" stroke="#7A7A7A" stroke-width="0.7"/>
<rect x="732.9" y="67.7" width="10.4" height="8.6" fill="#fff" stroke="#8A8A8A" stroke-width="1"/><rect x="737.3" y="72.6" width="1.8" height="1.8" fill="#6A6A6A"/>
<rect x="732.9" y="84.6" width="10.4" height="8.8" fill="#EAF4FA" stroke="#6E7A84" stroke-width="1"/><rect x="732.9" y="84.6" width="10.4" height="2" fill="#5D6B76"/>
<path d="M824,57.6 Q826.5,53.8 831.5,54 H841 V57.2 H826.8 Q825.4,57.2 824.8,58.2 Z" fill="#4B6581"/>
<path d="M829.6,56.5 H833 Q832.6,64.5 828.2,69.2 Q826.5,70 825.8,68.8 Q829.4,63.5 829.6,56.5 Z" fill="#4B6581"/>
<path d="M835.3,56.5 H838.6 V65.5 Q838.6,67.4 840.3,66.8 L840.8,67.4 Q839.3,69.6 837.3,69.6 Q835.3,69.6 835.3,66.5 Z" fill="#4B6581"/>
<text x="865.7" y="69.5" font-size="22.5" fill="#A9A9A9" text-anchor="middle" font-family="Liberation Serif">&#937;</text>
<rect x="900.4" y="53.3" width="16.8" height="16" fill="#6A6A6A"/><rect x="901.6" y="56.7" width="14.4" height="9.2" fill="#fff"/>
<path d="M901.2,55 H916.4 M901.2,67.6 H916.4" stroke="#fff" stroke-width="1.4" stroke-dasharray="1.3,1"/>
<path d="M929.5,57.7 H933.2 L940.3,53 V69.2 L933.2,64.3 H929.5 Z" fill="#6A6A6A"/>
<path d="M942.2,56.8 Q945,61 942.2,65.2" fill="none" stroke="#4A8AC6" stroke-width="1.2"/>
<rect x="965.5" y="50.3" width="16.6" height="12.5" fill="#fff" stroke="#D6D6D6" stroke-width="1"/>
<rect x="963" y="65" width="8.2" height="6" fill="#7C7C7C"/><rect x="963" y="66.7" width="8.2" height="1.3" fill="#C8C8C8"/>
<circle cx="973.5" cy="67.5" r="0.9" fill="#6A6A6A"/><circle cx="976" cy="68.3" r="0.5" fill="#999"/>
<path d="M978.8,68.5 H984.2 M981.5,65.8 V71.2" stroke="#5A5A5A" stroke-width="1.3"/>
<rect x="16" y="7.7" width="10.6" height="10.6" rx="0.8" fill="#F6DCD3"/>
<rect x="18.3" y="9.3" width="6" height="1.8" fill="#B7472A"/><rect x="18.3" y="14.2" width="6" height="2.6" fill="#B7472A"/><rect x="19.5" y="14.8" width="1" height="1.4" fill="#F6DCD3"/><rect x="21.8" y="14.8" width="1" height="1.4" fill="#F6DCD3"/>
<path d="M38,11.5 Q42,8.8 45.5,12 Q47,15 44.5,17.2" fill="none" stroke="#D4826A" stroke-width="1.2"/><path d="M36.3,10.2 L39.5,9.6 L38.8,13.5 Z" fill="#D4826A"/>
<circle cx="51.5" cy="12.5" r="0.9" fill="#D4826A"/>
<path d="M69.5,9.5 Q63,8 62.5,13 Q63,17.5 67,17.5 Q71,17 71.2,13" fill="none" stroke="#D4826A" stroke-width="1.2"/><path d="M67.5,8 L70.8,9.8 L68,12 Z" fill="#D4826A"/>
<rect x="82.5" y="8" width="11" height="7.3" fill="none" stroke="#F6DCD3" stroke-width="1.2"/><path d="M82,8 H94" stroke="#F6DCD3" stroke-width="1.8"/>
<path d="M86.8,10.2 L90.6,12.2 L86.8,14.2 Z" fill="#F6DCD3"/><path d="M88,15.3 V18.5 M85.5,18.5 H90.5" stroke="#F6DCD3" stroke-width="1"/>
<path d="M105.2,9.8 H110.8 M105.5,11.7 L108,14.3 L110.5,11.7" fill="none" stroke="#F6DCD3" stroke-width="1.1"/>
<circle cx="875" cy="12" r="8.4" fill="#E4E2E6" stroke="#F6EEEC" stroke-width="1.2"/>
<text x="875" y="14.7" font-size="7.4" fill="#7890A8" text-anchor="middle">CB</text>
<rect x="903.3" y="8.3" width="9.8" height="7.6" fill="none" stroke="#F6DCD3" stroke-width="1.1"/><path d="M903.3,10 H913" stroke="#F6DCD3" stroke-width="1"/><path d="M906.5,11.8 L908.2,13.8 L909.9,11.8 Z M908.2,11 V14.5" fill="#F6DCD3" stroke="#F6DCD3" stroke-width="0.8"/>
<path d="M937,12.2 H945" stroke="#F6DCD3" stroke-width="1"/>
<rect x="971" y="8.2" width="7.6" height="7.6" fill="none" stroke="#F6DCD3" stroke-width="1"/>
<path d="M1002.8,8.2 L1010.4,15.8 M1010.4,8.2 L1002.8,15.8" stroke="#F6DCD3" stroke-width="1.1"/>
<circle cx="975.8" cy="33.6" r="2.8" fill="none" stroke="#F6DCD3" stroke-width="1.1"/><path d="M971.5,40.5 Q972,36.8 975.8,36.6 Q978.5,36.6 979.5,38.5" fill="none" stroke="#F6DCD3" stroke-width="1.1"/><path d="M978.2,39.5 L981,39.5 L979.6,41.2 Z" fill="#F6DCD3"/>
<path d="M484.2,37.2 Q481.8,35 482.5,32.4 Q483.5,29.5 486.6,29.5 Q489.7,29.5 490.7,32.4 Q491.4,35 489,37.2 V39 H484.2 Z M484.8,40.8 H488.4" fill="none" stroke="#F6DCD3" stroke-width="1.1"/>
<path d="M60.5,636.3 H65 V644.2 H60.5 Z M65,637.5 H69 V644.2 H65" fill="none" stroke="#6E6E6E" stroke-width="0.9"/><path d="M66,642.5 L67.3,643.8 L70,640" fill="none" stroke="#6E6E6E" stroke-width="0.9"/>
<path d="M649.8,641.6 H657.4 M649.8,644 H657.4 M651.2,639.6 L653.6,637.2 L656,639.6" fill="none" stroke="#6E6E6E" stroke-width="0.9"/>
<path d="M696.3,636 H706.5 V642.5 H700 L697.8,645.2 V642.5 H696.3 Z" fill="#5F5F5F"/>
<rect x="761.2" y="633.3" width="28" height="14.5" fill="#D4D4D4"/>
<rect x="770.3" y="635.8" width="10.5" height="9" fill="none" stroke="#6E6E6E" stroke-width="0.9"/><path d="M773,636 V644.6" stroke="#6E6E6E" stroke-width="0.7"/><rect x="774.5" y="638" width="4.5" height="2.5" fill="none" stroke="#6E6E6E" stroke-width="0.7"/>
<path d="M798.5,635.8 h4 v3.6 h-4 Z M804.3,635.8 h4 v3.6 h-4 Z M798.5,641.2 h4 v3.6 h-4 Z M804.3,641.2 h4 v3.6 h-4 Z" fill="none" stroke="#6E6E6E" stroke-width="0.9"/>
<path d="M827.3,636 L831.5,637 V645 L827.3,644 Z M831.5,637 L835.8,636 V644 L831.5,645" fill="none" stroke="#6E6E6E" stroke-width="0.9"/>
<path d="M855.3,636.2 H864.7 M856,636.5 V641.5 H864 V636.5 M860,641.5 V644.5 M857.8,644.8 H862.2" fill="none" stroke="#6E6E6E" stroke-width="0.9"/>
<path d="M878.4,640.5 H883.5 M962.4,640.5 H968 M965.2,637.7 V643.3" stroke="#6E6E6E" stroke-width="0.9"/>
<rect x="888.2" y="640.2" width="71" height="0.8" fill="#A8A8A8"/><rect x="923" y="638.5" width="0.8" height="4" fill="#A8A8A8"/>
<rect x="911" y="636.5" width="3.3" height="8" fill="#6A6A6A"/>
<rect x="1002" y="636" width="9" height="9" fill="none" stroke="#6E6E6E" stroke-width="0.9"/><path d="M1003.5,637.5 L1006,640 M1009.5,637.5 L1007,640 M1003.5,643.5 L1006,641 M1009.5,643.5 L1007,641" stroke="#6E6E6E" stroke-width="0.8"/>
<rect x="947" y="45.6" width="52" height="64.5" fill="none" stroke="#20A083" stroke-width="5"/>
<path d="M873.5,117.5 L920,96.5" stroke="#20A083" stroke-width="7" stroke-linecap="round"/>
<path d="M916.3,88.6 L937.5,89.2 L924.2,107" fill="#20A083" stroke="#20A083" stroke-width="1.2" stroke-linejoin="round"/>
<rect x="0" y="46" width="1.2" height="603" fill="#B88A7C"/>
<rect x="1022.6" y="46" width="1.4" height="603" fill="#9C7A70"/>
<rect x="0" y="647.6" width="1024" height="1.4" fill="#8E6A60"/>
</svg>
</body></html>
